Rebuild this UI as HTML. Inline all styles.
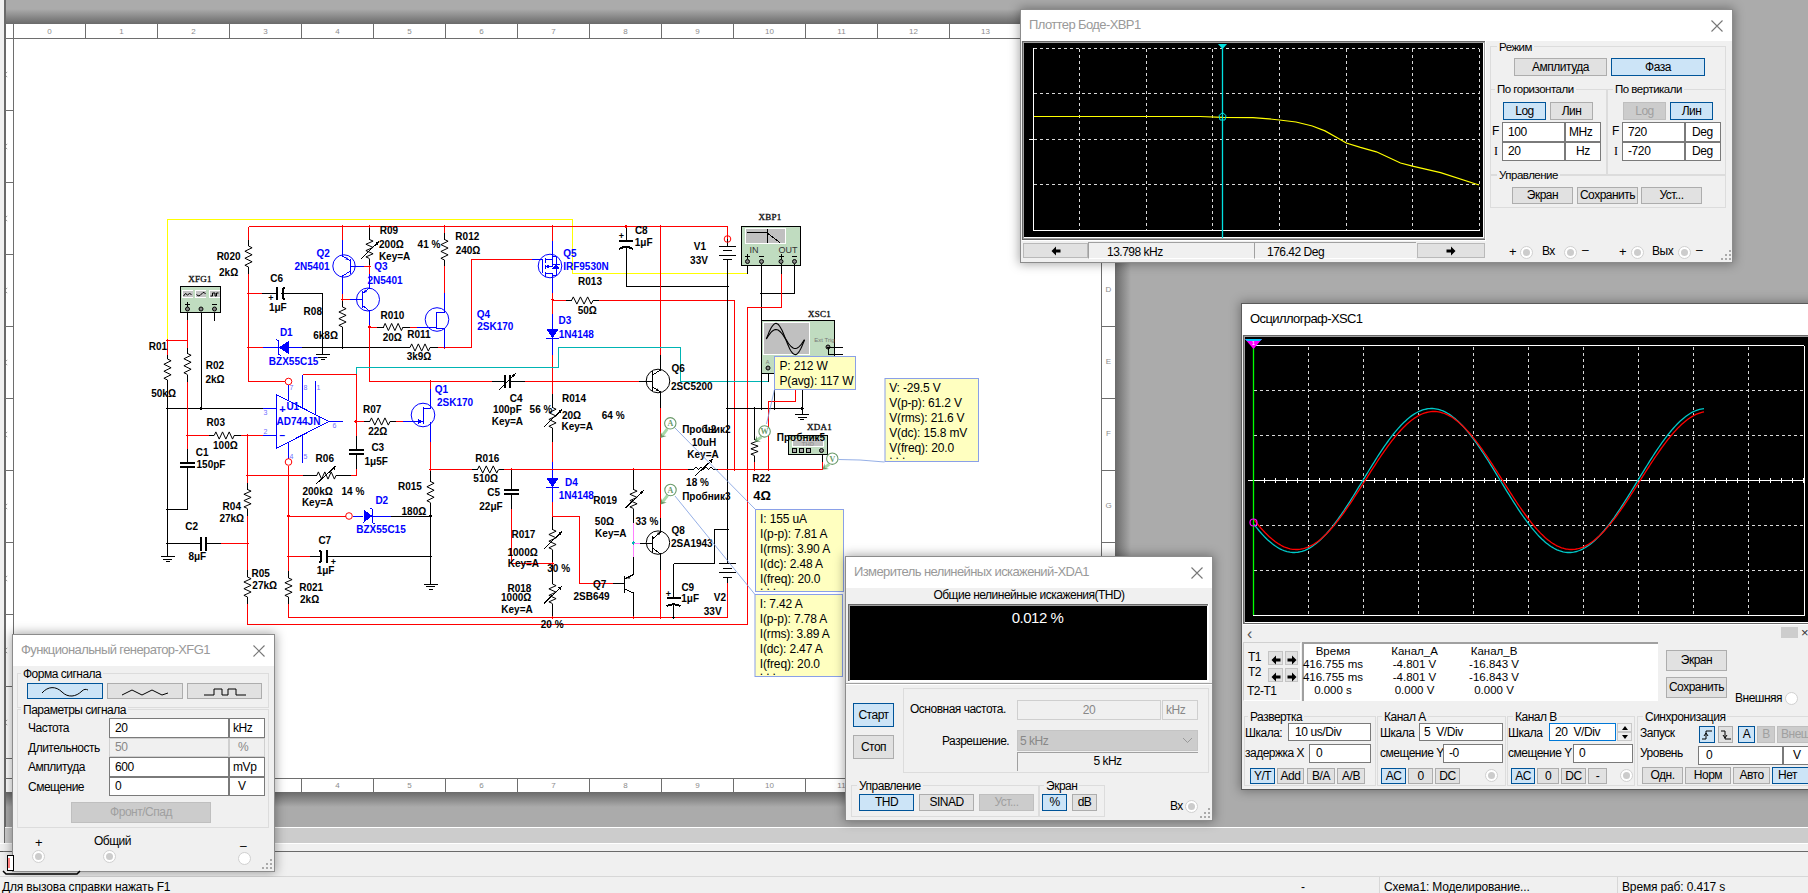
<!DOCTYPE html><html><head><meta charset="utf-8"><style>
*{margin:0;padding:0;box-sizing:border-box}
html,body{width:1808px;height:893px;overflow:hidden;background:#f0f0f0;font-family:"Liberation Sans", sans-serif;font-size:12px;color:#000}
.a{position:absolute}
.t{position:absolute;white-space:nowrap;line-height:1;letter-spacing:-0.5px}
.win{position:absolute;background:#f0f0f0;border:1px solid #8c8c8c;box-shadow:0 0 10px 1px rgba(0,0,0,0.35)}
.tb{position:absolute;left:0;top:0;right:0;background:#fff}
.ttl{position:absolute;white-space:nowrap;line-height:1;color:#999;font-size:13px;letter-spacing:-0.6px}
.btn{position:absolute;background:#e1e1e1;border:1px solid #adadad;text-align:center;white-space:nowrap;font-size:12px;letter-spacing:-0.5px}
.sel{background:#cce4f7;border-color:#005499}
.fld{position:absolute;background:#fff;border:1px solid #7a7a7a;white-space:nowrap;font-size:12px;letter-spacing:-0.4px}
.grp{position:absolute;border:1px solid #dcdcdc}
.gl{position:absolute;background:#f0f0f0;white-space:nowrap;line-height:1;padding:0 2px;font-size:12px;letter-spacing:-0.5px}
.rad{position:absolute;width:13px;height:13px;border-radius:50%;background:#fff;border:1px solid #d0d0d0}
.rad.dis::after{content:'';position:absolute;left:2px;top:2px;width:7px;height:7px;border-radius:50%;background:#ccc}
</style></head><body>
<div class="a" style="left:5px;top:0;width:1803px;height:851px;background:#ababab"></div>
<div class="a" style="left:5px;top:0;width:1110px;height:24px;background:linear-gradient(#ababab 0,#ababab 9px,#6a6a6a 24px)"></div>
<div class="a" style="left:1115px;top:23px;width:16px;height:769px;background:linear-gradient(90deg,#6a6a6a,#ababab)"></div>
<div class="a" style="left:5px;top:792px;width:1110px;height:15px;background:linear-gradient(#6a6a6a,#ababab)"></div>
<div class="a" style="left:1115px;top:792px;width:16px;height:15px;background:linear-gradient(135deg,#6a6a6a,#ababab)"></div>
<div class="a" style="left:4px;top:0;width:2px;height:844px;background:#6a6a6a"></div>
<div class="a" style="left:5px;top:827px;width:1803px;height:1px;background:#fff"></div>
<div class="a" style="left:5px;top:828px;width:1803px;height:15px;background:#cccccc"></div>
<div class="a" style="left:0;top:843px;width:1808px;height:8px;background:#f0f0f0;border-top:1px solid #fff"></div>
<div class="a" style="left:0;top:851px;width:1808px;height:1px;background:#6a6a6a"></div>
<div class="a" style="left:0;top:876px;width:1808px;height:1px;background:#d7d7d7"></div>
<div class="a" style="left:6px;top:24px;width:1109px;height:768px;background:#fff"></div>
<svg class="a" style="left:0;top:0" width="1808" height="893"><g stroke="#6e6e6e" stroke-width="1" fill="none" shape-rendering="crispEdges"><line x1="5" y1="38.5" x2="1101" y2="38.5"/><line x1="13.5" y1="23" x2="13.5" y2="779"/><line x1="1101.5" y1="23" x2="1101.5" y2="779"/><line x1="5" y1="778.5" x2="1115" y2="778.5"/><line x1="13.5" y1="23" x2="13.5" y2="38.5"/><line x1="13.5" y1="778.5" x2="13.5" y2="792"/><line x1="85.5" y1="23" x2="85.5" y2="38.5"/><line x1="85.5" y1="778.5" x2="85.5" y2="792"/><line x1="157.5" y1="23" x2="157.5" y2="38.5"/><line x1="157.5" y1="778.5" x2="157.5" y2="792"/><line x1="229.5" y1="23" x2="229.5" y2="38.5"/><line x1="229.5" y1="778.5" x2="229.5" y2="792"/><line x1="301.5" y1="23" x2="301.5" y2="38.5"/><line x1="301.5" y1="778.5" x2="301.5" y2="792"/><line x1="373.5" y1="23" x2="373.5" y2="38.5"/><line x1="373.5" y1="778.5" x2="373.5" y2="792"/><line x1="445.5" y1="23" x2="445.5" y2="38.5"/><line x1="445.5" y1="778.5" x2="445.5" y2="792"/><line x1="517.5" y1="23" x2="517.5" y2="38.5"/><line x1="517.5" y1="778.5" x2="517.5" y2="792"/><line x1="589.5" y1="23" x2="589.5" y2="38.5"/><line x1="589.5" y1="778.5" x2="589.5" y2="792"/><line x1="661.5" y1="23" x2="661.5" y2="38.5"/><line x1="661.5" y1="778.5" x2="661.5" y2="792"/><line x1="733.5" y1="23" x2="733.5" y2="38.5"/><line x1="733.5" y1="778.5" x2="733.5" y2="792"/><line x1="805.5" y1="23" x2="805.5" y2="38.5"/><line x1="805.5" y1="778.5" x2="805.5" y2="792"/><line x1="877.5" y1="23" x2="877.5" y2="38.5"/><line x1="877.5" y1="778.5" x2="877.5" y2="792"/><line x1="949.5" y1="23" x2="949.5" y2="38.5"/><line x1="949.5" y1="778.5" x2="949.5" y2="792"/><line x1="1021.5" y1="23" x2="1021.5" y2="38.5"/><line x1="1021.5" y1="778.5" x2="1021.5" y2="792"/><line x1="1093.5" y1="23" x2="1093.5" y2="38.5"/><line x1="1093.5" y1="778.5" x2="1093.5" y2="792"/><line x1="5" y1="110.5" x2="13.5" y2="110.5"/><line x1="1101.5" y1="110.5" x2="1115" y2="110.5"/><line x1="5" y1="182.5" x2="13.5" y2="182.5"/><line x1="1101.5" y1="182.5" x2="1115" y2="182.5"/><line x1="5" y1="254.5" x2="13.5" y2="254.5"/><line x1="1101.5" y1="254.5" x2="1115" y2="254.5"/><line x1="5" y1="326.5" x2="13.5" y2="326.5"/><line x1="1101.5" y1="326.5" x2="1115" y2="326.5"/><line x1="5" y1="398.5" x2="13.5" y2="398.5"/><line x1="1101.5" y1="398.5" x2="1115" y2="398.5"/><line x1="5" y1="470.5" x2="13.5" y2="470.5"/><line x1="1101.5" y1="470.5" x2="1115" y2="470.5"/><line x1="5" y1="542.5" x2="13.5" y2="542.5"/><line x1="1101.5" y1="542.5" x2="1115" y2="542.5"/><line x1="5" y1="614.5" x2="13.5" y2="614.5"/><line x1="1101.5" y1="614.5" x2="1115" y2="614.5"/><line x1="5" y1="686.5" x2="13.5" y2="686.5"/><line x1="1101.5" y1="686.5" x2="1115" y2="686.5"/><line x1="5" y1="758.5" x2="13.5" y2="758.5"/><line x1="1101.5" y1="758.5" x2="1115" y2="758.5"/></g><g fill="#8c8c8c" font-size="8" font-family="Liberation Sans, sans-serif" text-anchor="middle"><text x="49.5" y="34">0</text><text x="49.5" y="788">0</text><text x="121.5" y="34">1</text><text x="121.5" y="788">1</text><text x="193.5" y="34">2</text><text x="193.5" y="788">2</text><text x="265.5" y="34">3</text><text x="265.5" y="788">3</text><text x="337.5" y="34">4</text><text x="337.5" y="788">4</text><text x="409.5" y="34">5</text><text x="409.5" y="788">5</text><text x="481.5" y="34">6</text><text x="481.5" y="788">6</text><text x="553.5" y="34">7</text><text x="553.5" y="788">7</text><text x="625.5" y="34">8</text><text x="625.5" y="788">8</text><text x="697.5" y="34">9</text><text x="697.5" y="788">9</text><text x="769.5" y="34">10</text><text x="769.5" y="788">10</text><text x="841.5" y="34">11</text><text x="841.5" y="788">11</text><text x="913.5" y="34">12</text><text x="913.5" y="788">12</text><text x="985.5" y="34">13</text><text x="985.5" y="788">13</text><text x="1057.5" y="34">14</text><text x="1057.5" y="788">14</text><text x="1108.5" y="76.0">A</text><path d="M6,73.0 l1.2,-1 M6,76.0 l1.2,1" stroke="#888" stroke-width="0.9"/><text x="1108.5" y="148.0">B</text><path d="M6,145.0 l1.2,-1 M6,148.0 l1.2,1" stroke="#888" stroke-width="0.9"/><text x="1108.5" y="220.0">C</text><path d="M6,217.0 l1.2,-1 M6,220.0 l1.2,1" stroke="#888" stroke-width="0.9"/><text x="1108.5" y="292.0">D</text><path d="M6,289.0 l1.2,-1 M6,292.0 l1.2,1" stroke="#888" stroke-width="0.9"/><text x="1108.5" y="364.0">E</text><path d="M6,361.0 l1.2,-1 M6,364.0 l1.2,1" stroke="#888" stroke-width="0.9"/><text x="1108.5" y="436.0">F</text><path d="M6,433.0 l1.2,-1 M6,436.0 l1.2,1" stroke="#888" stroke-width="0.9"/><text x="1108.5" y="508.0">G</text><path d="M6,505.0 l1.2,-1 M6,508.0 l1.2,1" stroke="#888" stroke-width="0.9"/><text x="1108.5" y="580.0">H</text><path d="M6,577.0 l1.2,-1 M6,580.0 l1.2,1" stroke="#888" stroke-width="0.9"/><text x="1108.5" y="652.0">I</text><path d="M6,649.0 l1.2,-1 M6,652.0 l1.2,1" stroke="#888" stroke-width="0.9"/><text x="1108.5" y="724.0">J</text><path d="M6,721.0 l1.2,-1 M6,724.0 l1.2,1" stroke="#888" stroke-width="0.9"/></g></svg>
<svg class="a" style="left:0;top:0" width="1808" height="893" font-family="Liberation Sans, sans-serif"><g shape-rendering="crispEdges"><polyline points="167.5,340.5 167.5,219.5 572.5,219.5 572.5,273.5 747.5,273.5" fill="none" stroke="#ffff00" stroke-width="1"/><line x1="747.5" y1="261.5" x2="747.5" y2="273.5" stroke="#000000" stroke-width="1"/><line x1="248.5" y1="226.5" x2="727.5" y2="226.5" stroke="#ff0000" stroke-width="1"/><line x1="727.5" y1="226.5" x2="727.5" y2="239" stroke="#ff0000" stroke-width="1"/><line x1="248.5" y1="226.5" x2="248.5" y2="240" stroke="#ff0000" stroke-width="1"/><line x1="248.5" y1="240" x2="248.5" y2="246" stroke="#000000" stroke-width="1"/><line x1="248.5" y1="267" x2="248.5" y2="274" stroke="#000000" stroke-width="1"/><line x1="248.5" y1="274" x2="248.5" y2="381.5" stroke="#ff0000" stroke-width="1"/><polyline points="248.5,246 252.1,247.75 244.9,251.25 252.1,254.75 244.9,258.25 252.1,261.75 244.9,265.25 248.5,267" fill="none" stroke="#000000" stroke-width="1" shape-rendering="geometricPrecision"/><path d="M246.7,293.5 L248.5,291.7 L250.3,293.5 L248.5,295.3Z" fill="#ff0000"/><path d="M246.7,347.5 L248.5,345.7 L250.3,347.5 L248.5,349.3Z" fill="#ff0000"/><line x1="248.5" y1="293.5" x2="262" y2="293.5" stroke="#ff0000" stroke-width="1"/><line x1="262" y1="293.5" x2="276" y2="293.5" stroke="#000000" stroke-width="1"/><line x1="283" y1="293.5" x2="322.5" y2="293.5" stroke="#000000" stroke-width="1"/><line x1="276.5" y1="287.0" x2="276.5" y2="300.0" stroke="#000000" stroke-width="2"/><path d="M284.0,287.0 Q281.0,293.5 284.0,300.0" fill="none" stroke="#000000" stroke-width="2"/><line x1="322.5" y1="293.5" x2="322.5" y2="354.5" stroke="#000000" stroke-width="1"/><line x1="315.5" y1="354.5" x2="329.5" y2="354.5" stroke="#000000" stroke-width="1"/><line x1="318.0" y1="357.0" x2="327.0" y2="357.0" stroke="#000000" stroke-width="1"/><line x1="320.5" y1="359.5" x2="324.5" y2="359.5" stroke="#000000" stroke-width="1"/><line x1="248.5" y1="347.5" x2="262.5" y2="347.5" stroke="#ff0000" stroke-width="1"/><line x1="262.5" y1="347.5" x2="301.5" y2="347.5" stroke="#0000ff" stroke-width="1"/><line x1="301.5" y1="347.5" x2="410" y2="347.5" stroke="#000000" stroke-width="1"/><line x1="430" y1="347.5" x2="438" y2="347.5" stroke="#000000" stroke-width="1"/><line x1="438" y1="347.5" x2="471.5" y2="347.5" stroke="#ff0000" stroke-width="1"/><polyline points="410,347.5 411.6666666666667,343.9 415.0,351.1 418.3333333333333,343.9 421.6666666666667,351.1 425.0,343.9 428.3333333333333,351.1 430,347.5" fill="none" stroke="#000000" stroke-width="1" shape-rendering="geometricPrecision"/><path d="M320.7,347.5 L322.5,345.7 L324.3,347.5 L322.5,349.3Z" fill="#000000"/><path d="M340.7,347.5 L342.5,345.7 L344.3,347.5 L342.5,349.3Z" fill="#000000"/><path d="M442.7,347.5 L444.5,345.7 L446.3,347.5 L444.5,349.3Z" fill="#ff0000"/><path d="M288.5,341 L288.5,354 L278.5,347.5Z" fill="#0000ff"/><polyline points="276,339.5 278.5,341 278.5,354 281,355.5" fill="none" stroke="#0000ff" stroke-width="1"/><line x1="248.5" y1="381.5" x2="285" y2="381.5" stroke="#ff0000" stroke-width="1"/><circle cx="288.5" cy="381.5" r="3.3" fill="none" stroke="#ff0000" stroke-width="1" shape-rendering="geometricPrecision"/><line x1="342.5" y1="226.5" x2="342.5" y2="239.5" stroke="#ff0000" stroke-width="1"/><line x1="342.5" y1="239.5" x2="342.5" y2="256" stroke="#0000ff" stroke-width="1"/><line x1="342.5" y1="276" x2="342.5" y2="293.5" stroke="#0000ff" stroke-width="1"/><line x1="342.5" y1="293.5" x2="342.5" y2="299.5" stroke="#ff0000" stroke-width="1"/><line x1="342.5" y1="299.5" x2="342.5" y2="307" stroke="#000000" stroke-width="1"/><line x1="342.5" y1="327" x2="342.5" y2="347.5" stroke="#000000" stroke-width="1"/><polyline points="342.5,307 346.1,308.6666666666667 338.9,312.0 346.1,315.3333333333333 338.9,318.6666666666667 346.1,322.0 338.9,325.3333333333333 342.5,327" fill="none" stroke="#000000" stroke-width="1" shape-rendering="geometricPrecision"/><path d="M340.7,226.5 L342.5,224.7 L344.3,226.5 L342.5,228.3Z" fill="#ff0000"/><path d="M340.7,299.5 L342.5,297.7 L344.3,299.5 L342.5,301.3Z" fill="#ff0000"/><circle cx="344" cy="266" r="11.2" fill="none" stroke="#0000ff" stroke-width="1" shape-rendering="geometricPrecision"/><line x1="350.5" y1="258.5" x2="350.5" y2="273.5" stroke="#0000ff" stroke-width="1"/><line x1="350.5" y1="261" x2="342.5" y2="256" stroke="#0000ff" stroke-width="1"/><line x1="350.5" y1="271" x2="342.5" y2="276" stroke="#0000ff" stroke-width="1"/><path d="M348.5,259.8 L345.3,259.6 L346.9,257.0Z" fill="#0000ff" shape-rendering="geometricPrecision"/><line x1="350.5" y1="266.5" x2="363.5" y2="266.5" stroke="#0000ff" stroke-width="1"/><line x1="363.5" y1="266.5" x2="369.5" y2="266.5" stroke="#ff0000" stroke-width="1"/><line x1="369.5" y1="226.5" x2="369.5" y2="239.5" stroke="#000000" stroke-width="1"/><line x1="369.5" y1="258.5" x2="369.5" y2="266.5" stroke="#000000" stroke-width="1"/><line x1="369.5" y1="266.5" x2="369.5" y2="274" stroke="#ff0000" stroke-width="1"/><line x1="369.5" y1="274" x2="369.5" y2="288" stroke="#0000ff" stroke-width="1"/><line x1="369.5" y1="311" x2="369.5" y2="327" stroke="#0000ff" stroke-width="1"/><line x1="369.5" y1="327" x2="369.5" y2="381.5" stroke="#ff0000" stroke-width="1"/><polyline points="369.5,239.5 373.1,241.08333333333334 365.9,244.25 373.1,247.41666666666666 365.9,250.58333333333334 373.1,253.75 365.9,256.9166666666667 369.5,258.5" fill="none" stroke="#000000" stroke-width="1" shape-rendering="geometricPrecision"/><line x1="361" y1="258.7" x2="379" y2="241.5" stroke="#000000" stroke-width="1"/><path d="M379,241.5 L377.6,245.2 L375.2,242.7Z" fill="#000000"/><path d="M367.7,226.5 L369.5,224.7 L371.3,226.5 L369.5,228.3Z" fill="#ff0000"/><path d="M367.7,266.5 L369.5,264.7 L371.3,266.5 L369.5,268.3Z" fill="#ff0000"/><path d="M367.7,327 L369.5,325.2 L371.3,327 L369.5,328.8Z" fill="#ff0000"/><circle cx="368" cy="299.5" r="11.5" fill="none" stroke="#0000ff" stroke-width="1" shape-rendering="geometricPrecision"/><line x1="362" y1="291" x2="362" y2="308" stroke="#0000ff" stroke-width="1"/><line x1="362" y1="294" x2="369.5" y2="288" stroke="#0000ff" stroke-width="1"/><line x1="362" y1="305" x2="369.5" y2="311" stroke="#0000ff" stroke-width="1"/><path d="M363.9,292.5 L365.1,289.5 L367.0,291.9Z" fill="#0000ff" shape-rendering="geometricPrecision"/><line x1="342.5" y1="299.5" x2="349.5" y2="299.5" stroke="#ff0000" stroke-width="1"/><line x1="349.5" y1="299.5" x2="362" y2="299.5" stroke="#0000ff" stroke-width="1"/><line x1="369.5" y1="327" x2="377" y2="327" stroke="#ff0000" stroke-width="1"/><line x1="377" y1="327" x2="383.5" y2="327" stroke="#000000" stroke-width="1"/><line x1="403" y1="327" x2="410" y2="327" stroke="#000000" stroke-width="1"/><line x1="410" y1="327" x2="417" y2="327" stroke="#ff0000" stroke-width="1"/><line x1="417" y1="327" x2="436.5" y2="327" stroke="#0000ff" stroke-width="1"/><polyline points="383.5,327 385.125,323.4 388.375,330.6 391.625,323.4 394.875,330.6 398.125,323.4 401.375,330.6 403,327" fill="none" stroke="#000000" stroke-width="1" shape-rendering="geometricPrecision"/><circle cx="437" cy="319.5" r="11.8" fill="none" stroke="#0000ff" stroke-width="1" shape-rendering="geometricPrecision"/><line x1="436.5" y1="311.5" x2="436.5" y2="328.5" stroke="#0000ff" stroke-width="1"/><line x1="436.5" y1="312.5" x2="445" y2="312.5" stroke="#0000ff" stroke-width="1"/><line x1="436.5" y1="328.5" x2="445" y2="328.5" stroke="#0000ff" stroke-width="1"/><line x1="444.5" y1="226.5" x2="444.5" y2="233" stroke="#ff0000" stroke-width="1"/><line x1="444.5" y1="233" x2="444.5" y2="239.5" stroke="#000000" stroke-width="1"/><line x1="444.5" y1="260" x2="444.5" y2="266" stroke="#000000" stroke-width="1"/><line x1="444.5" y1="266" x2="444.5" y2="293" stroke="#ff0000" stroke-width="1"/><line x1="444.5" y1="293" x2="444.5" y2="312.5" stroke="#0000ff" stroke-width="1"/><line x1="444.5" y1="328.5" x2="444.5" y2="347.5" stroke="#0000ff" stroke-width="1"/><polyline points="444.5,239.5 448.1,241.20833333333334 440.9,244.625 448.1,248.04166666666666 440.9,251.45833333333334 448.1,254.875 440.9,258.2916666666667 444.5,260" fill="none" stroke="#000000" stroke-width="1" shape-rendering="geometricPrecision"/><path d="M442.7,226.5 L444.5,224.7 L446.3,226.5 L444.5,228.3Z" fill="#ff0000"/><polyline points="531.5,259.5 471.5,259.5 471.5,347.5" fill="none" stroke="#ff0000" stroke-width="1"/><line x1="531.5" y1="259.5" x2="542.5" y2="259.5" stroke="#0000ff" stroke-width="1"/><line x1="552.5" y1="226.5" x2="552.5" y2="240.5" stroke="#ff0000" stroke-width="1"/><line x1="552.5" y1="240.5" x2="552.5" y2="255" stroke="#0000ff" stroke-width="1"/><line x1="552.5" y1="277" x2="552.5" y2="293" stroke="#0000ff" stroke-width="1"/><line x1="552.5" y1="293" x2="552.5" y2="313.5" stroke="#ff0000" stroke-width="1"/><line x1="552.5" y1="313.5" x2="552.5" y2="354.5" stroke="#0000ff" stroke-width="1"/><line x1="552.5" y1="354.5" x2="552.5" y2="393.5" stroke="#ff0000" stroke-width="1"/><line x1="552.5" y1="393.5" x2="552.5" y2="407.5" stroke="#000000" stroke-width="1"/><line x1="552.5" y1="428" x2="552.5" y2="442" stroke="#000000" stroke-width="1"/><line x1="552.5" y1="442" x2="552.5" y2="462" stroke="#ff0000" stroke-width="1"/><line x1="552.5" y1="462" x2="552.5" y2="501.5" stroke="#0000ff" stroke-width="1"/><line x1="552.5" y1="501.5" x2="552.5" y2="516.5" stroke="#ff0000" stroke-width="1"/><line x1="552.5" y1="516.5" x2="552.5" y2="529.5" stroke="#000000" stroke-width="1"/><line x1="552.5" y1="549.5" x2="552.5" y2="584" stroke="#000000" stroke-width="1"/><line x1="552.5" y1="603.5" x2="552.5" y2="617.5" stroke="#000000" stroke-width="1"/><path d="M550.7,226.5 L552.5,224.7 L554.3,226.5 L552.5,228.3Z" fill="#ff0000"/><path d="M550.7,299.5 L552.5,297.7 L554.3,299.5 L552.5,301.3Z" fill="#ff0000"/><path d="M550.7,381.5 L552.5,379.7 L554.3,381.5 L552.5,383.3Z" fill="#ff0000"/><path d="M550.7,563.5 L552.5,561.7 L554.3,563.5 L552.5,565.3Z" fill="#ff0000"/><path d="M550.7,617.5 L552.5,615.7 L554.3,617.5 L552.5,619.3Z" fill="#ff0000"/><circle cx="550" cy="266" r="11.8" fill="none" stroke="#0000ff" stroke-width="1" shape-rendering="geometricPrecision"/><line x1="542.5" y1="258.5" x2="542.5" y2="272.5" stroke="#0000ff" stroke-width="1"/><line x1="545" y1="258" x2="545" y2="262.5" stroke="#0000ff" stroke-width="1"/><line x1="545" y1="265" x2="545" y2="268.5" stroke="#0000ff" stroke-width="1"/><line x1="545" y1="272" x2="545" y2="276.5" stroke="#0000ff" stroke-width="1"/><line x1="545" y1="259.5" x2="552.5" y2="259.5" stroke="#0000ff" stroke-width="1"/><line x1="545" y1="266.5" x2="552.5" y2="266.5" stroke="#0000ff" stroke-width="1"/><line x1="545" y1="273.5" x2="552.5" y2="273.5" stroke="#0000ff" stroke-width="1"/><line x1="552.5" y1="255" x2="552.5" y2="266.5" stroke="#0000ff" stroke-width="1"/><line x1="552.5" y1="273.5" x2="552.5" y2="277" stroke="#0000ff" stroke-width="1"/><path d="M545.5,266.5 L549,264.2 L549,268.8Z" fill="#0000ff"/><line x1="556" y1="256.5" x2="556" y2="275.5" stroke="#0000ff" stroke-width="1"/><line x1="552.5" y1="256.5" x2="556" y2="256.5" stroke="#0000ff" stroke-width="1"/><line x1="552.5" y1="275.5" x2="556" y2="275.5" stroke="#0000ff" stroke-width="1"/><path d="M556,264 L559.5,268.5 L552.5,268.5Z" fill="#0000ff"/><line x1="552.5" y1="264.5" x2="559.5" y2="264.5" stroke="#0000ff" stroke-width="1"/><path d="M546,328.5 L559,328.5 L552.5,338Z" fill="#0000ff"/><line x1="546" y1="338.5" x2="559" y2="338.5" stroke="#0000ff" stroke-width="1"/><polyline points="552.5,407.5 556.1,409.2083333333333 548.9,412.625 556.1,416.0416666666667 548.9,419.4583333333333 556.1,422.875 548.9,426.2916666666667 552.5,428" fill="none" stroke="#000000" stroke-width="1" shape-rendering="geometricPrecision"/><line x1="544" y1="427" x2="562" y2="409.5" stroke="#000000" stroke-width="1"/><path d="M562,409.5 L560.6,413.3 L558.2,410.8Z" fill="#000000"/><path d="M546,477.5 L559,477.5 L552.5,487Z" fill="#0000ff"/><line x1="546" y1="487.5" x2="559" y2="487.5" stroke="#0000ff" stroke-width="1"/><polyline points="552.5,529.5 556.1,531.1666666666666 548.9,534.5 556.1,537.8333333333334 548.9,541.1666666666666 556.1,544.5 548.9,547.8333333333334 552.5,549.5" fill="none" stroke="#000000" stroke-width="1" shape-rendering="geometricPrecision"/><line x1="544" y1="549" x2="562" y2="531.5" stroke="#000000" stroke-width="1"/><path d="M562,531.5 L560.6,535.3 L558.2,532.8Z" fill="#000000"/><polyline points="552.5,584 556.1,585.625 548.9,588.875 556.1,592.125 548.9,595.375 556.1,598.625 548.9,601.875 552.5,603.5" fill="none" stroke="#000000" stroke-width="1" shape-rendering="geometricPrecision"/><line x1="544" y1="603.5" x2="562" y2="586" stroke="#000000" stroke-width="1"/><path d="M562,586 L560.6,589.8 L558.2,587.3Z" fill="#000000"/><line x1="552.5" y1="300.5" x2="566" y2="300.5" stroke="#ff0000" stroke-width="1"/><line x1="566" y1="300.5" x2="571.5" y2="300.5" stroke="#000000" stroke-width="1"/><line x1="593" y1="300.5" x2="599" y2="300.5" stroke="#000000" stroke-width="1"/><line x1="599" y1="300.5" x2="734.5" y2="300.5" stroke="#ff0000" stroke-width="1"/><polyline points="571.5,300.5 573.2916666666666,296.9 576.875,304.1 580.4583333333334,296.9 584.0416666666666,304.1 587.625,296.9 591.2083333333334,304.1 593,300.5" fill="none" stroke="#000000" stroke-width="1" shape-rendering="geometricPrecision"/><line x1="734.5" y1="300.5" x2="734.5" y2="469.5" stroke="#ff0000" stroke-width="1"/><line x1="626" y1="226.5" x2="626" y2="240" stroke="#000000" stroke-width="1"/><line x1="626" y1="248" x2="626" y2="287" stroke="#000000" stroke-width="1"/><path d="M624.2,226.5 L626,224.7 L627.8,226.5 L626,228.3Z" fill="#ff0000"/><line x1="619" y1="240.5" x2="633" y2="240.5" stroke="#000000" stroke-width="2"/><path d="M619,249 Q626,245 633,249" fill="none" stroke="#000000" stroke-width="2"/><line x1="626" y1="286.5" x2="727.5" y2="286.5" stroke="#000000" stroke-width="1"/><path d="M725.7,286.5 L727.5,284.7 L729.3,286.5 L727.5,288.3Z" fill="#000000"/><line x1="660.5" y1="226.5" x2="660.5" y2="355" stroke="#ff0000" stroke-width="1"/><line x1="660.5" y1="355" x2="660.5" y2="370" stroke="#000000" stroke-width="1"/><line x1="660.5" y1="392" x2="660.5" y2="407.5" stroke="#000000" stroke-width="1"/><line x1="660.5" y1="407.5" x2="660.5" y2="517.5" stroke="#ff0000" stroke-width="1"/><line x1="660.5" y1="517.5" x2="660.5" y2="532" stroke="#000000" stroke-width="1"/><line x1="660.5" y1="554" x2="660.5" y2="569.5" stroke="#000000" stroke-width="1"/><line x1="660.5" y1="569.5" x2="660.5" y2="617.5" stroke="#ff0000" stroke-width="1"/><path d="M658.7,226.5 L660.5,224.7 L662.3,226.5 L660.5,228.3Z" fill="#ff0000"/><path d="M658.7,469.5 L660.5,467.7 L662.3,469.5 L660.5,471.3Z" fill="#ff0000"/><path d="M658.7,617.5 L660.5,615.7 L662.3,617.5 L660.5,619.3Z" fill="#ff0000"/><circle cx="658" cy="381" r="11.8" fill="none" stroke="#000000" stroke-width="1" shape-rendering="geometricPrecision"/><line x1="652.5" y1="371" x2="652.5" y2="391" stroke="#000000" stroke-width="1"/><line x1="652.5" y1="375" x2="660.5" y2="370" stroke="#000000" stroke-width="1"/><line x1="652.5" y1="387" x2="660.5" y2="392" stroke="#000000" stroke-width="1"/><path d="M658.9,391.0 L655.7,390.8 L657.3,388.2Z" fill="#000000" shape-rendering="geometricPrecision"/><line x1="552.5" y1="381.5" x2="639" y2="381.5" stroke="#ff0000" stroke-width="1"/><line x1="639" y1="381.5" x2="652.5" y2="381.5" stroke="#000000" stroke-width="1"/><polyline points="356,374 356,367.5 558.5,367.5 558.5,347.5 680.5,347.5 680.5,381.5 768.5,381.5" fill="none" stroke="#00b4b4" stroke-width="1"/><line x1="768.5" y1="370" x2="768.5" y2="381.5" stroke="#000000" stroke-width="1"/><line x1="727.5" y1="239" x2="727.5" y2="246.5" stroke="#000000" stroke-width="1"/><line x1="727.5" y1="259.5" x2="727.5" y2="563.5" stroke="#000000" stroke-width="1"/><line x1="727.5" y1="577.5" x2="727.5" y2="583" stroke="#000000" stroke-width="1"/><line x1="727.5" y1="583" x2="727.5" y2="617.5" stroke="#ff0000" stroke-width="1"/><circle cx="727.5" cy="239" r="3.3" fill="none" stroke="#ff0000" stroke-width="1" shape-rendering="geometricPrecision"/><line x1="719.0" y1="246.5" x2="736.0" y2="246.5" stroke="#000000" stroke-width="1"/><line x1="723.0" y1="250.5" x2="732.0" y2="250.5" stroke="#000000" stroke-width="1"/><line x1="719.0" y1="255.5" x2="736.0" y2="255.5" stroke="#000000" stroke-width="1"/><line x1="723.0" y1="259.5" x2="732.0" y2="259.5" stroke="#000000" stroke-width="1"/><line x1="719.0" y1="563.5" x2="736.0" y2="563.5" stroke="#000000" stroke-width="1"/><line x1="723.0" y1="568.5" x2="732.0" y2="568.5" stroke="#000000" stroke-width="1"/><line x1="719.0" y1="572.5" x2="736.0" y2="572.5" stroke="#000000" stroke-width="1"/><line x1="723.0" y1="577.5" x2="732.0" y2="577.5" stroke="#000000" stroke-width="1"/><path d="M725.7,408.5 L727.5,406.7 L729.3,408.5 L727.5,410.3Z" fill="#000000"/><path d="M725.7,529.5 L727.5,527.7 L729.3,529.5 L727.5,531.3Z" fill="#000000"/><rect x="741.5" y="226.5" width="59" height="39" fill="#c0dcc0" stroke="#000000"/><rect x="745.5" y="228.5" width="40" height="14.5" fill="#c0c0c0" stroke="#fff"/><polyline points="747,232.5 766.5,232.5 780,242.5" fill="none" stroke="#000000" stroke-width="1"/><line x1="767.5" y1="229" x2="767.5" y2="242.5" stroke="#000000" stroke-width="1"/><text x="754" y="252.7" fill="#333" font-size="9" font-weight="normal" text-anchor="middle" >IN</text><text x="788" y="252.7" fill="#333" font-size="9" font-weight="normal" text-anchor="middle" >OUT</text><circle cx="747.5" cy="261.5" r="2" fill="#888" stroke="#000000" stroke-width="1" shape-rendering="geometricPrecision"/><circle cx="761.5" cy="261.5" r="2" fill="#888" stroke="#000000" stroke-width="1" shape-rendering="geometricPrecision"/><circle cx="781" cy="261.5" r="2" fill="#888" stroke="#000000" stroke-width="1" shape-rendering="geometricPrecision"/><circle cx="794.5" cy="261.5" r="2" fill="#888" stroke="#000000" stroke-width="1" shape-rendering="geometricPrecision"/><line x1="745" y1="256.5" x2="750" y2="256.5" stroke="#000000" stroke-width="1"/><line x1="747.5" y1="254" x2="747.5" y2="259" stroke="#000000" stroke-width="1"/><line x1="759" y1="256.5" x2="764" y2="256.5" stroke="#000000" stroke-width="1"/><line x1="778.5" y1="256.5" x2="783.5" y2="256.5" stroke="#000000" stroke-width="1"/><line x1="781" y1="254" x2="781" y2="259" stroke="#000000" stroke-width="1"/><line x1="792" y1="256.5" x2="797" y2="256.5" stroke="#000000" stroke-width="1"/><text x="770" y="220.2" fill="#000000" font-size="9" font-weight="normal" text-anchor="middle" font-family="Liberation Serif, serif" fill="#222" stroke="#222" stroke-width="0.35" letter-spacing="0.3">XBP1</text><line x1="761.5" y1="263.5" x2="761.5" y2="408.5" stroke="#000000" stroke-width="1"/><polyline points="794.5,263.5 794.5,293.5 761.5,293.5" fill="none" stroke="#000000" stroke-width="1"/><path d="M759.7,293.5 L761.5,291.7 L763.3,293.5 L761.5,295.3Z" fill="#000000"/><line x1="781" y1="263.5" x2="781" y2="273.5" stroke="#000000" stroke-width="1"/><polyline points="781,273.5 781,307.5 747.5,307.5 747.5,624.5" fill="none" stroke="#ff0000" stroke-width="1"/><path d="M745.7,469.5 L747.5,467.7 L749.3,469.5 L747.5,471.3Z" fill="#ff0000"/><rect x="761.5" y="320.5" width="73" height="52.5" fill="#c0dcc0" stroke="#000000"/><rect x="763.5" y="322.5" width="46" height="32" fill="#c0c0c0" stroke="#fff"/></g><polyline points="766.3,339.0 767.3,336.5 768.3,334.1 769.2,331.8 770.2,329.7 771.2,327.8 772.2,326.3 773.2,325.0 774.1,324.1 775.1,323.5 776.1,323.4 777.1,323.7 778.1,324.3 779.0,325.3 780.0,326.7 781.0,328.4 782.0,330.3 783.0,332.5 783.9,334.8 784.9,337.3 785.9,339.7 786.9,342.2 787.8,344.6 788.8,346.8 789.8,348.9 790.8,350.7 791.8,352.2 792.7,353.3 793.7,354.1 794.7,354.5 795.7,354.6 796.7,354.2 797.6,353.4 798.6,352.3 799.6,350.8 800.6,349.1 801.6,347.1 802.5,344.8 803.5,342.5 804.5,340.0" fill="none" stroke="#000" stroke-width="1.1" shape-rendering="geometricPrecision"/><polyline points="766.3,339.0 767.3,337.5 768.3,336.0 769.2,334.6 770.2,333.3 771.2,332.2 772.2,331.2 773.2,330.5 774.1,329.9 775.1,329.6 776.1,329.5 777.1,329.7 778.1,330.1 779.0,330.7 780.0,331.5 781.0,332.5 782.0,333.7 783.0,335.0 783.9,336.5 784.9,337.9 785.9,339.4 786.9,340.9 787.8,342.4 788.8,343.8 789.8,345.0 790.8,346.1 791.8,347.0 792.7,347.7 793.7,348.2 794.7,348.5 795.7,348.5 796.7,348.2 797.6,347.8 798.6,347.1 799.6,346.2 800.6,345.1 801.6,343.9 802.5,342.6 803.5,341.1 804.5,339.6" fill="none" stroke="#000" stroke-width="1.1" shape-rendering="geometricPrecision"/><g shape-rendering="crispEdges"><text x="824.5" y="341.7" fill="#777" font-size="6" font-weight="normal" text-anchor="middle" >Ext Trig</text><circle cx="828" cy="347" r="2" fill="#888" stroke="#000000" stroke-width="1" shape-rendering="geometricPrecision"/><polyline points="843,347.5 828,347.5 828.5,354.5 843,354.5" fill="none" stroke="#000000" stroke-width="1"/><circle cx="768" cy="368" r="2" fill="#888" stroke="#000000" stroke-width="1" shape-rendering="geometricPrecision"/><text x="767.5" y="364.0" fill="#777" font-size="5.5" font-weight="normal" text-anchor="middle" >A</text><text x="819.5" y="316.7" fill="#000000" font-size="9" font-weight="normal" text-anchor="middle" font-family="Liberation Serif, serif" fill="#222" stroke="#222" stroke-width="0.35" letter-spacing="0.3">XSC1</text><line x1="727.5" y1="408.5" x2="802" y2="408.5" stroke="#000000" stroke-width="1"/><path d="M752.7,408.5 L754.5,406.7 L756.3,408.5 L754.5,410.3Z" fill="#000000"/><path d="M759.7,408.5 L761.5,406.7 L763.3,408.5 L761.5,410.3Z" fill="#000000"/><path d="M772.7,408.5 L774.5,406.7 L776.3,408.5 L774.5,410.3Z" fill="#000000"/><path d="M800.2,408.5 L802,406.7 L803.8,408.5 L802,410.3Z" fill="#000000"/><line x1="774.5" y1="389.5" x2="774.5" y2="408.5" stroke="#000000" stroke-width="1"/><line x1="802" y1="389.5" x2="802" y2="414.5" stroke="#000000" stroke-width="1"/><line x1="795" y1="414.5" x2="809" y2="414.5" stroke="#000000" stroke-width="1"/><line x1="797.5" y1="417.0" x2="806.5" y2="417.0" stroke="#000000" stroke-width="1"/><line x1="800" y1="419.5" x2="804" y2="419.5" stroke="#000000" stroke-width="1"/><polyline points="795.5,389.5 795.5,401.5 768.5,401.5 768.5,469.5" fill="none" stroke="#ff0000" stroke-width="1"/><path d="M766.7,469.5 L768.5,467.7 L770.3,469.5 L768.5,471.3Z" fill="#ff0000"/><line x1="754.5" y1="408.5" x2="754.5" y2="439.5" stroke="#000000" stroke-width="1"/><line x1="754.5" y1="455.5" x2="754.5" y2="462" stroke="#000000" stroke-width="1"/><line x1="754.5" y1="462" x2="754.5" y2="469.5" stroke="#ff0000" stroke-width="1"/><polyline points="754.5,439.5 758.1,440.8333333333333 750.9,443.5 758.1,446.1666666666667 750.9,448.8333333333333 758.1,451.5 750.9,454.1666666666667 754.5,455.5" fill="none" stroke="#000000" stroke-width="1" shape-rendering="geometricPrecision"/><path d="M752.7,469.5 L754.5,467.7 L756.3,469.5 L754.5,471.3Z" fill="#ff0000"/><line x1="430.5" y1="469.5" x2="471.5" y2="469.5" stroke="#ff0000" stroke-width="1"/><line x1="471.5" y1="469.5" x2="477.5" y2="469.5" stroke="#000000" stroke-width="1"/><line x1="498.5" y1="469.5" x2="504" y2="469.5" stroke="#000000" stroke-width="1"/><line x1="504" y1="469.5" x2="688" y2="469.5" stroke="#ff0000" stroke-width="1"/><line x1="718" y1="469.5" x2="822.5" y2="469.5" stroke="#ff0000" stroke-width="1"/><polyline points="477.5,469.5 479.25,465.9 482.75,473.1 486.25,465.9 489.75,473.1 493.25,465.9 496.75,473.1 498.5,469.5" fill="none" stroke="#000000" stroke-width="1" shape-rendering="geometricPrecision"/><path d="M509.7,469.5 L511.5,467.7 L513.3,469.5 L511.5,471.3Z" fill="#ff0000"/><path d="M631.7,469.5 L633.5,467.7 L635.3,469.5 L633.5,471.3Z" fill="#ff0000"/><path d="M732.7,469.5 L734.5,467.7 L736.3,469.5 L734.5,471.3Z" fill="#ff0000"/><path d="M688,469.5 L693.5,469.5 q2.5,-4 5,0 q2.5,-4 5,0 q2.5,-4 5,0 q2.5,-4 5,0 L718,469.5" fill="none" stroke="#000000"/><line x1="695" y1="476" x2="713" y2="459" stroke="#000000" stroke-width="1"/><path d="M713,459 L711.6,462.7 L709.2,460.2Z" fill="#000000"/><line x1="822.5" y1="469.5" x2="822.5" y2="462" stroke="#ff0000" stroke-width="1"/><line x1="822.5" y1="452" x2="822.5" y2="462" stroke="#000000" stroke-width="1"/><rect x="788.5" y="435.5" width="39" height="19" fill="#c0dcc0" stroke="#000000"/><rect x="792.5" y="439.5" width="31" height="7" fill="#c0c0c0" stroke="#fff"/><text x="808" y="445.5" font-size="6" font-weight="bold" text-anchor="middle" fill="#999">THD</text><rect x="792.5" y="448.5" width="4" height="4" fill="#aaa" stroke="#000000"/><rect x="799.5" y="448.5" width="4" height="4" fill="#aaa" stroke="#000000"/><rect x="806" y="448.5" width="4" height="4" fill="#aaa" stroke="#000000"/><circle cx="821.5" cy="450.5" r="2" fill="#888" stroke="#000000" stroke-width="1" shape-rendering="geometricPrecision"/><text x="819.5" y="430.2" fill="#000000" font-size="9" font-weight="normal" text-anchor="middle" font-family="Liberation Serif, serif" fill="#222" stroke="#222" stroke-width="0.35" letter-spacing="0.3">XDA1</text><line x1="369.5" y1="381.5" x2="491.5" y2="381.5" stroke="#ff0000" stroke-width="1"/><line x1="491.5" y1="381.5" x2="505" y2="381.5" stroke="#000000" stroke-width="1"/><line x1="510" y1="381.5" x2="525" y2="381.5" stroke="#000000" stroke-width="1"/><line x1="525" y1="381.5" x2="552.5" y2="381.5" stroke="#ff0000" stroke-width="1"/><line x1="505" y1="375.0" x2="505" y2="388.0" stroke="#000000" stroke-width="2"/><line x1="510" y1="375.0" x2="510" y2="388.0" stroke="#000000" stroke-width="2"/><line x1="498.5" y1="390.5" x2="515.5" y2="373.5" stroke="#000000" stroke-width="1"/><path d="M515.5,373.5 L514.2,377.3 L511.7,374.8Z" fill="#000000"/><path d="M428.7,381.5 L430.5,379.7 L432.3,381.5 L430.5,383.3Z" fill="#ff0000"/><line x1="430.5" y1="381.5" x2="430.5" y2="389" stroke="#ff0000" stroke-width="1"/><line x1="430.5" y1="389" x2="430.5" y2="408" stroke="#0000ff" stroke-width="1"/><line x1="430.5" y1="421.5" x2="430.5" y2="442" stroke="#0000ff" stroke-width="1"/><line x1="430.5" y1="442" x2="430.5" y2="469.5" stroke="#ff0000" stroke-width="1"/><line x1="430.5" y1="469.5" x2="430.5" y2="481.5" stroke="#000000" stroke-width="1"/><line x1="430.5" y1="502.5" x2="430.5" y2="584" stroke="#000000" stroke-width="1"/><polyline points="430.5,481.5 434.1,483.25 426.9,486.75 434.1,490.25 426.9,493.75 434.1,497.25 426.9,500.75 430.5,502.5" fill="none" stroke="#000000" stroke-width="1" shape-rendering="geometricPrecision"/><path d="M428.7,469.5 L430.5,467.7 L432.3,469.5 L430.5,471.3Z" fill="#ff0000"/><path d="M428.7,516 L430.5,514.2 L432.3,516 L430.5,517.8Z" fill="#000000"/><path d="M428.7,556.5 L430.5,554.7 L432.3,556.5 L430.5,558.3Z" fill="#000000"/><line x1="423.5" y1="584" x2="437.5" y2="584" stroke="#000000" stroke-width="1"/><line x1="426.0" y1="586.5" x2="435.0" y2="586.5" stroke="#000000" stroke-width="1"/><line x1="428.5" y1="589" x2="432.5" y2="589" stroke="#000000" stroke-width="1"/><circle cx="423" cy="415" r="11.8" fill="none" stroke="#0000ff" stroke-width="1" shape-rendering="geometricPrecision"/><line x1="423.5" y1="406.5" x2="423.5" y2="423.5" stroke="#0000ff" stroke-width="1"/><line x1="423.5" y1="408" x2="430.5" y2="408" stroke="#0000ff" stroke-width="1"/><line x1="403" y1="421.5" x2="423.5" y2="421.5" stroke="#0000ff" stroke-width="1"/><path d="M423,421.5 L418,419 L418,424Z" fill="#0000ff"/><path d="M276,394.5 L276,448.5 L329,421.5Z" fill="none" stroke="#0000ff"/><line x1="329" y1="421.5" x2="342.5" y2="421.5" stroke="#0000ff" stroke-width="1"/><line x1="356" y1="421.5" x2="364" y2="421.5" stroke="#ff0000" stroke-width="1"/><line x1="364" y1="421.5" x2="369.8" y2="421.5" stroke="#000000" stroke-width="1"/><line x1="390" y1="421.5" x2="396" y2="421.5" stroke="#000000" stroke-width="1"/><line x1="396" y1="421.5" x2="403" y2="421.5" stroke="#ff0000" stroke-width="1"/><polyline points="369.8,421.5 371.48333333333335,417.9 374.85,425.1 378.2166666666667,417.9 381.5833333333333,425.1 384.95,417.9 388.31666666666666,425.1 390,421.5" fill="none" stroke="#000000" stroke-width="1" shape-rendering="geometricPrecision"/><line x1="288.5" y1="385" x2="288.5" y2="400.5" stroke="#0000ff" stroke-width="1"/><line x1="288.5" y1="442.5" x2="288.5" y2="458.5" stroke="#0000ff" stroke-width="1"/><line x1="302.5" y1="374.5" x2="302.5" y2="407.5" stroke="#0000ff" stroke-width="1"/><line x1="302.5" y1="435" x2="302.5" y2="462.5" stroke="#0000ff" stroke-width="1"/><line x1="315.5" y1="381" x2="315.5" y2="414" stroke="#0000ff" stroke-width="1"/><polyline points="302.5,374.5 356,374.5 356,435.5" fill="none" stroke="#ff0000" stroke-width="1"/><path d="M354.2,421.5 L356,419.7 L357.8,421.5 L356,423.3Z" fill="#ff0000"/><line x1="356" y1="435.5" x2="356" y2="450" stroke="#000000" stroke-width="1"/><line x1="356" y1="454" x2="356" y2="468.5" stroke="#000000" stroke-width="1"/><line x1="356" y1="468.5" x2="356" y2="475.5" stroke="#ff0000" stroke-width="1"/><line x1="348.5" y1="450" x2="363.5" y2="450" stroke="#000000" stroke-width="2"/><line x1="348.5" y1="454" x2="363.5" y2="454" stroke="#000000" stroke-width="2"/><line x1="167.5" y1="408.5" x2="262.5" y2="408.5" stroke="#000000" stroke-width="1"/><line x1="262.5" y1="408.5" x2="276" y2="408.5" stroke="#0000ff" stroke-width="1"/><path d="M165.7,408.5 L167.5,406.7 L169.3,408.5 L167.5,410.3Z" fill="#000000"/><path d="M199.2,408.5 L201,406.7 L202.8,408.5 L201,410.3Z" fill="#000000"/><line x1="187.5" y1="435.5" x2="208.5" y2="435.5" stroke="#ff0000" stroke-width="1"/><line x1="208.5" y1="435.5" x2="214.2" y2="435.5" stroke="#000000" stroke-width="1"/><line x1="234.2" y1="435.5" x2="240.6" y2="435.5" stroke="#000000" stroke-width="1"/><line x1="240.6" y1="435.5" x2="262.5" y2="435.5" stroke="#ff0000" stroke-width="1"/><line x1="262.5" y1="435.5" x2="276" y2="435.5" stroke="#0000ff" stroke-width="1"/><polyline points="214.2,435.5 215.86666666666665,431.9 219.2,439.1 222.53333333333333,431.9 225.86666666666665,439.1 229.2,431.9 232.53333333333333,439.1 234.2,435.5" fill="none" stroke="#000000" stroke-width="1" shape-rendering="geometricPrecision"/><path d="M185.7,435.5 L187.5,433.7 L189.3,435.5 L187.5,437.3Z" fill="#ff0000"/><path d="M245.7,435.5 L247.5,433.7 L249.3,435.5 L247.5,437.3Z" fill="#ff0000"/><text x="282.5" y="412.5" fill="#0000ff" font-size="11" font-weight="bold" text-anchor="middle" >+</text><text x="282.5" y="439.1" fill="#0000ff" font-size="10" font-weight="bold" text-anchor="middle" >−</text><text x="265.5" y="414.5" fill="#7070ff" font-size="7" font-weight="normal" text-anchor="middle" >3</text><text x="265.5" y="433.5" fill="#7070ff" font-size="7" font-weight="normal" text-anchor="middle" >2</text><text x="291.5" y="389.5" fill="#7070ff" font-size="7" font-weight="normal" text-anchor="middle" >7</text><text x="305.5" y="389.5" fill="#7070ff" font-size="7" font-weight="normal" text-anchor="middle" >8</text><text x="318.5" y="389.5" fill="#7070ff" font-size="7" font-weight="normal" text-anchor="middle" >1</text><text x="291.5" y="458.5" fill="#7070ff" font-size="7" font-weight="normal" text-anchor="middle" >4</text><text x="305.5" y="458.5" fill="#7070ff" font-size="7" font-weight="normal" text-anchor="middle" >5</text><text x="334.5" y="427.5" fill="#7070ff" font-size="7" font-weight="normal" text-anchor="middle" >6</text><circle cx="288.5" cy="462" r="3.3" fill="none" stroke="#ff0000" stroke-width="1" shape-rendering="geometricPrecision"/><line x1="167.5" y1="340.5" x2="167.5" y2="355" stroke="#ff0000" stroke-width="1"/><line x1="167.5" y1="355" x2="167.5" y2="359" stroke="#000000" stroke-width="1"/><line x1="167.5" y1="380" x2="167.5" y2="556.5" stroke="#000000" stroke-width="1"/><polyline points="167.5,359 171.1,360.75 163.9,364.25 171.1,367.75 163.9,371.25 171.1,374.75 163.9,378.25 167.5,380" fill="none" stroke="#000000" stroke-width="1" shape-rendering="geometricPrecision"/><path d="M165.7,340.5 L167.5,338.7 L169.3,340.5 L167.5,342.3Z" fill="#ff0000"/><path d="M165.7,509.5 L167.5,507.7 L169.3,509.5 L167.5,511.3Z" fill="#000000"/><path d="M165.7,543.5 L167.5,541.7 L169.3,543.5 L167.5,545.3Z" fill="#000000"/><line x1="160.5" y1="556.5" x2="174.5" y2="556.5" stroke="#000000" stroke-width="1"/><line x1="163.0" y1="559.0" x2="172.0" y2="559.0" stroke="#000000" stroke-width="1"/><line x1="165.5" y1="561.5" x2="169.5" y2="561.5" stroke="#000000" stroke-width="1"/><line x1="167.5" y1="340.5" x2="187.5" y2="340.5" stroke="#ff0000" stroke-width="1"/><line x1="187.5" y1="311" x2="187.5" y2="320" stroke="#000000" stroke-width="1"/><line x1="187.5" y1="320" x2="187.5" y2="348" stroke="#ff0000" stroke-width="1"/><line x1="187.5" y1="348" x2="187.5" y2="353.5" stroke="#000000" stroke-width="1"/><line x1="187.5" y1="374.5" x2="187.5" y2="381.5" stroke="#000000" stroke-width="1"/><line x1="187.5" y1="381.5" x2="187.5" y2="449" stroke="#ff0000" stroke-width="1"/><line x1="187.5" y1="449" x2="187.5" y2="462.5" stroke="#000000" stroke-width="1"/><line x1="187.5" y1="467" x2="187.5" y2="509.5" stroke="#000000" stroke-width="1"/><polyline points="187.5,353.5 191.1,355.25 183.9,358.75 191.1,362.25 183.9,365.75 191.1,369.25 183.9,372.75 187.5,374.5" fill="none" stroke="#000000" stroke-width="1" shape-rendering="geometricPrecision"/><line x1="180.0" y1="462.5" x2="195.0" y2="462.5" stroke="#000000" stroke-width="2"/><line x1="180.0" y1="466.8" x2="195.0" y2="466.8" stroke="#000000" stroke-width="2"/><line x1="167.5" y1="509.5" x2="187.5" y2="509.5" stroke="#000000" stroke-width="1"/><line x1="201" y1="311" x2="201" y2="408.5" stroke="#000000" stroke-width="1"/><line x1="214.5" y1="311" x2="214.5" y2="320.5" stroke="#000000" stroke-width="1"/><rect x="180.5" y="286.5" width="40" height="26" fill="#c0dcc0" stroke="#000000"/><rect x="182" y="290" width="11" height="8" fill="#fff" stroke="none"/><rect x="182.5" y="291" width="10" height="5.5" fill="#c4c4c4" stroke="none"/><rect x="195" y="290" width="11" height="8" fill="#fff" stroke="none"/><rect x="195.5" y="291" width="10" height="5.5" fill="#c4c4c4" stroke="none"/><rect x="209" y="290" width="11" height="8" fill="#fff" stroke="none"/><rect x="209.5" y="291" width="10" height="5.5" fill="#c4c4c4" stroke="none"/></g><path d="M183.5,296 L185.5,293.5 L187.5,295 L189.5,293.5 L191.5,294.5 M196.5,294.5 Q198,296.5 200,295.5 L203,292.5 Q204.5,292 205.5,294 M210.5,296 L212.5,296 L212.5,293 L215,293 L215,296 L216.5,296 L216.5,293 L218.5,293" fill="none" stroke="#000" stroke-width="1"/><g shape-rendering="crispEdges"><circle cx="187.5" cy="309" r="2" fill="#888" stroke="#000000" stroke-width="1" shape-rendering="geometricPrecision"/><circle cx="201" cy="309" r="2" fill="#888" stroke="#000000" stroke-width="1" shape-rendering="geometricPrecision"/><circle cx="214.5" cy="309" r="2" fill="#888" stroke="#000000" stroke-width="1" shape-rendering="geometricPrecision"/><line x1="185" y1="304.5" x2="190" y2="304.5" stroke="#000000" stroke-width="1"/><line x1="187.5" y1="302" x2="187.5" y2="307" stroke="#000000" stroke-width="1"/><line x1="212" y1="304.5" x2="217" y2="304.5" stroke="#000000" stroke-width="1"/><text x="200" y="281.7" fill="#000000" font-size="9" font-weight="normal" text-anchor="middle" font-family="Liberation Serif, serif" fill="#222" stroke="#222" stroke-width="0.35" letter-spacing="0.3">XFG1</text><line x1="247.5" y1="435.5" x2="247.5" y2="483" stroke="#ff0000" stroke-width="1"/><line x1="247.5" y1="483" x2="247.5" y2="489.5" stroke="#000000" stroke-width="1"/><line x1="247.5" y1="508.5" x2="247.5" y2="516" stroke="#000000" stroke-width="1"/><line x1="247.5" y1="516" x2="247.5" y2="569.5" stroke="#ff0000" stroke-width="1"/><line x1="247.5" y1="569.5" x2="247.5" y2="577" stroke="#000000" stroke-width="1"/><line x1="247.5" y1="597" x2="247.5" y2="603.5" stroke="#000000" stroke-width="1"/><line x1="247.5" y1="603.5" x2="247.5" y2="624.5" stroke="#ff0000" stroke-width="1"/><polyline points="247.5,489.5 251.1,491.0833333333333 243.9,494.25 251.1,497.4166666666667 243.9,500.5833333333333 251.1,503.75 243.9,506.9166666666667 247.5,508.5" fill="none" stroke="#000000" stroke-width="1" shape-rendering="geometricPrecision"/><polyline points="247.5,577 251.1,578.6666666666666 243.9,582.0 251.1,585.3333333333334 243.9,588.6666666666666 251.1,592.0 243.9,595.3333333333334 247.5,597" fill="none" stroke="#000000" stroke-width="1" shape-rendering="geometricPrecision"/><path d="M245.7,475.5 L247.5,473.7 L249.3,475.5 L247.5,477.3Z" fill="#ff0000"/><path d="M245.7,543.5 L247.5,541.7 L249.3,543.5 L247.5,545.3Z" fill="#ff0000"/><line x1="247.5" y1="624.5" x2="747.5" y2="624.5" stroke="#ff0000" stroke-width="1"/><line x1="167.5" y1="543.5" x2="201" y2="543.5" stroke="#000000" stroke-width="1"/><line x1="206" y1="543.5" x2="220.5" y2="543.5" stroke="#000000" stroke-width="1"/><line x1="220.5" y1="543.5" x2="247.5" y2="543.5" stroke="#ff0000" stroke-width="1"/><line x1="201" y1="536.5" x2="201" y2="550.5" stroke="#000000" stroke-width="2"/><line x1="206" y1="536.5" x2="206" y2="550.5" stroke="#000000" stroke-width="2"/><line x1="247.5" y1="475.5" x2="302.5" y2="475.5" stroke="#ff0000" stroke-width="1"/><line x1="302.5" y1="475.5" x2="316.8" y2="475.5" stroke="#000000" stroke-width="1"/><line x1="336" y1="475.5" x2="350.5" y2="475.5" stroke="#000000" stroke-width="1"/><line x1="350.5" y1="475.5" x2="356" y2="475.5" stroke="#ff0000" stroke-width="1"/><polyline points="316.8,475.5 318.40000000000003,471.9 321.6,479.1 324.8,471.9 328.0,479.1 331.2,471.9 334.4,479.1 336,475.5" fill="none" stroke="#000000" stroke-width="1" shape-rendering="geometricPrecision"/><line x1="316" y1="484" x2="336" y2="466" stroke="#000000" stroke-width="1"/><path d="M336,466 L334.5,469.7 L332.2,467.1Z" fill="#000000"/><line x1="288.5" y1="465.5" x2="288.5" y2="571" stroke="#ff0000" stroke-width="1"/><line x1="288.5" y1="571" x2="288.5" y2="578" stroke="#000000" stroke-width="1"/><line x1="288.5" y1="597" x2="288.5" y2="603.5" stroke="#000000" stroke-width="1"/><line x1="288.5" y1="603.5" x2="288.5" y2="617.5" stroke="#ff0000" stroke-width="1"/><polyline points="288.5,578 292.1,579.5833333333334 284.9,582.75 292.1,585.9166666666666 284.9,589.0833333333334 292.1,592.25 284.9,595.4166666666666 288.5,597" fill="none" stroke="#000000" stroke-width="1" shape-rendering="geometricPrecision"/><path d="M286.7,475.5 L288.5,473.7 L290.3,475.5 L288.5,477.3Z" fill="#ff0000"/><path d="M286.7,516 L288.5,514.2 L290.3,516 L288.5,517.8Z" fill="#ff0000"/><path d="M286.7,556.5 L288.5,554.7 L290.3,556.5 L288.5,558.3Z" fill="#ff0000"/><line x1="288.5" y1="617.5" x2="727.5" y2="617.5" stroke="#ff0000" stroke-width="1"/><line x1="288.5" y1="516" x2="345.5" y2="516" stroke="#ff0000" stroke-width="1"/><line x1="352.5" y1="516" x2="363" y2="516" stroke="#0000ff" stroke-width="1"/><line x1="372" y1="516" x2="390.5" y2="516" stroke="#0000ff" stroke-width="1"/><line x1="390.5" y1="516" x2="430.5" y2="516" stroke="#000000" stroke-width="1"/><circle cx="349" cy="516" r="3.3" fill="none" stroke="#ff0000" stroke-width="1" shape-rendering="geometricPrecision"/><path d="M363.5,509.5 L363.5,522.5 L372.5,516Z" fill="#0000ff"/><polyline points="370,508 372.5,509.5 372.5,522.5 375,524" fill="none" stroke="#0000ff" stroke-width="1"/><line x1="288.5" y1="556.5" x2="309.5" y2="556.5" stroke="#ff0000" stroke-width="1"/><line x1="309.5" y1="556.5" x2="321.5" y2="556.5" stroke="#000000" stroke-width="1"/><line x1="327" y1="556.5" x2="430.5" y2="556.5" stroke="#000000" stroke-width="1"/><path d="M320.0,550.0 Q323.0,556.5 320.0,563.0" fill="none" stroke="#000000" stroke-width="2"/><line x1="326.5" y1="550.0" x2="326.5" y2="563.0" stroke="#000000" stroke-width="2"/><text x="333.5" y="564.7" fill="#000000" font-size="9" font-weight="bold" text-anchor="middle" >+</text><line x1="511.5" y1="469.5" x2="511.5" y2="490" stroke="#000000" stroke-width="1"/><line x1="511.5" y1="494.5" x2="511.5" y2="508.5" stroke="#000000" stroke-width="1"/><line x1="511.5" y1="508.5" x2="511.5" y2="563.5" stroke="#ff0000" stroke-width="1"/><line x1="504.0" y1="490" x2="519.0" y2="490" stroke="#000000" stroke-width="2"/><line x1="504.0" y1="494.3" x2="519.0" y2="494.3" stroke="#000000" stroke-width="2"/><line x1="511.5" y1="563.5" x2="552.5" y2="563.5" stroke="#ff0000" stroke-width="1"/><polyline points="552.5,516.5 579.5,516.5 579.5,583.5 612.5,583.5" fill="none" stroke="#ff0000" stroke-width="1"/><line x1="612.5" y1="583.5" x2="624.5" y2="583.5" stroke="#000000" stroke-width="1"/><line x1="633.5" y1="469.5" x2="633.5" y2="489.5" stroke="#000000" stroke-width="1"/><line x1="633.5" y1="508.5" x2="633.5" y2="523" stroke="#000000" stroke-width="1"/><line x1="633.5" y1="523" x2="633.5" y2="557" stroke="#ff80ff" stroke-width="1"/><line x1="633.5" y1="557" x2="633.5" y2="574.5" stroke="#000000" stroke-width="1"/><line x1="633.5" y1="593" x2="633.5" y2="617.5" stroke="#000000" stroke-width="1"/><polyline points="633.5,489.5 637.1,491.0833333333333 629.9,494.25 637.1,497.4166666666667 629.9,500.5833333333333 637.1,503.75 629.9,506.9166666666667 633.5,508.5" fill="none" stroke="#000000" stroke-width="1" shape-rendering="geometricPrecision"/><line x1="625.5" y1="508" x2="643.5" y2="490.5" stroke="#000000" stroke-width="1"/><path d="M643.5,490.5 L642.1,494.3 L639.7,491.8Z" fill="#000000"/><path d="M631.7,617.5 L633.5,615.7 L635.3,617.5 L633.5,619.3Z" fill="#ff0000"/><path d="M631.7,543 L633.5,541.2 L635.3,543 L633.5,544.8Z" fill="#00b4b4"/><line x1="624.5" y1="575.5" x2="624.5" y2="593" stroke="#000000" stroke-width="1"/><line x1="624.5" y1="579" x2="633.5" y2="574.5" stroke="#000000" stroke-width="1"/><line x1="624.5" y1="589" x2="633.5" y2="593" stroke="#000000" stroke-width="1"/><path d="M627.2,578.5 L628.9,575.8 L630.4,578.5Z" fill="#000000" shape-rendering="geometricPrecision"/><line x1="633.5" y1="543" x2="640" y2="543" stroke="#ff80ff" stroke-width="1"/><line x1="640" y1="543" x2="652.5" y2="543" stroke="#000000" stroke-width="1"/><circle cx="658" cy="542.6" r="11.7" fill="none" stroke="#000000" stroke-width="1" shape-rendering="geometricPrecision"/><line x1="652.5" y1="536" x2="652.5" y2="552.5" stroke="#000000" stroke-width="1"/><line x1="652.5" y1="539" x2="660.5" y2="532" stroke="#000000" stroke-width="1"/><line x1="652.5" y1="548" x2="660.5" y2="554" stroke="#000000" stroke-width="1"/><path d="M656.9,535.1 L658.0,532.1 L660.0,534.5Z" fill="#000000" shape-rendering="geometricPrecision"/><line x1="673.5" y1="563.5" x2="673.5" y2="598" stroke="#000000" stroke-width="1"/><line x1="673.5" y1="604" x2="673.5" y2="617.5" stroke="#000000" stroke-width="1"/><line x1="666.5" y1="598" x2="680.5" y2="598" stroke="#000000" stroke-width="2"/><path d="M666.5,605.9 Q673.5,602.9 680.5,605.9" fill="none" stroke="#000000" stroke-width="2"/><text x="668.5" y="596.7" fill="#000000" font-size="9" font-weight="bold" text-anchor="middle" >+</text><polyline points="673.5,563.5 714.5,563.5 714.5,529.5 727.5,529.5" fill="none" stroke="#000000" stroke-width="1"/><path d="M671.7,617.5 L673.5,615.7 L675.3,617.5 L673.5,619.3Z" fill="#000000"/><text x="621.5" y="238.7" fill="#000000" font-size="9" font-weight="bold" text-anchor="middle" >+</text><text x="271" y="301.2" fill="#000000" font-size="9" font-weight="bold" text-anchor="middle" >+</text></g><text x="228.6" y="260.2" fill="#000000" font-size="10" font-weight="bold" text-anchor="middle" >R020</text><text x="228.6" y="276.0" fill="#000000" font-size="10" font-weight="bold" text-anchor="middle" >2kΩ</text><text x="276.7" y="281.6" fill="#000000" font-size="10" font-weight="bold" text-anchor="middle" >C6</text><text x="277.8" y="311.3" fill="#000000" font-size="10" font-weight="bold" text-anchor="middle" >1μF</text><text x="323.2" y="256.7" fill="#0000ff" font-size="10" font-weight="bold" text-anchor="middle" >Q2</text><text x="312" y="270.4" fill="#0000ff" font-size="10" font-weight="bold" text-anchor="middle" >2N5401</text><text x="381" y="270.4" fill="#0000ff" font-size="10" font-weight="bold" text-anchor="middle" >Q3</text><text x="385" y="284.0" fill="#0000ff" font-size="10" font-weight="bold" text-anchor="middle" >2N5401</text><text x="389" y="234.3" fill="#000000" font-size="10" font-weight="bold" text-anchor="middle" >R09</text><text x="391.4" y="247.9" fill="#000000" font-size="10" font-weight="bold" text-anchor="middle" >200Ω</text><text x="394.6" y="259.6" fill="#000000" font-size="10" font-weight="bold" text-anchor="middle" >Key=A</text><text x="429" y="247.9" fill="#000000" font-size="10" font-weight="bold" text-anchor="middle" >41 %</text><text x="392.4" y="319.2" fill="#000000" font-size="10" font-weight="bold" text-anchor="middle" >R010</text><text x="392.2" y="341.0" fill="#000000" font-size="10" font-weight="bold" text-anchor="middle" >20Ω</text><text x="419" y="337.9" fill="#000000" font-size="10" font-weight="bold" text-anchor="middle" >R011</text><text x="419" y="359.6" fill="#000000" font-size="10" font-weight="bold" text-anchor="middle" >3k9Ω</text><text x="312.8" y="315.3" fill="#000000" font-size="10" font-weight="bold" text-anchor="middle" >R08</text><text x="325.6" y="339.3" fill="#000000" font-size="10" font-weight="bold" text-anchor="middle" >6k8Ω</text><text x="286.3" y="336.1" fill="#0000ff" font-size="10" font-weight="bold" text-anchor="middle" >D1</text><text x="293.6" y="364.5" fill="#0000ff" font-size="10" font-weight="bold" text-anchor="middle" >BZX55C15</text><text x="467.3" y="239.9" fill="#000000" font-size="10" font-weight="bold" text-anchor="middle" >R012</text><text x="468" y="253.6" fill="#000000" font-size="10" font-weight="bold" text-anchor="middle" >240Ω</text><text x="570" y="256.7" fill="#0000ff" font-size="10" font-weight="bold" text-anchor="middle" >Q5</text><text x="586" y="270.4" fill="#0000ff" font-size="10" font-weight="bold" text-anchor="middle" >IRF9530N</text><text x="590" y="284.8" fill="#000000" font-size="10" font-weight="bold" text-anchor="middle" >R013</text><text x="587.3" y="313.6" fill="#000000" font-size="10" font-weight="bold" text-anchor="middle" >50Ω</text><text x="565" y="324.1" fill="#0000ff" font-size="10" font-weight="bold" text-anchor="middle" >D3</text><text x="576.3" y="337.6" fill="#0000ff" font-size="10" font-weight="bold" text-anchor="middle" >1N4148</text><text x="483.3" y="317.6" fill="#0000ff" font-size="10" font-weight="bold" text-anchor="middle" >Q4</text><text x="495.3" y="329.6" fill="#0000ff" font-size="10" font-weight="bold" text-anchor="middle" >2SK170</text><text x="641.3" y="233.5" fill="#000000" font-size="10" font-weight="bold" text-anchor="middle" >C8</text><text x="643.7" y="245.5" fill="#000000" font-size="10" font-weight="bold" text-anchor="middle" >1μF</text><text x="699.9" y="250.3" fill="#000000" font-size="10" font-weight="bold" text-anchor="middle" >V1</text><text x="699" y="263.9" fill="#000000" font-size="10" font-weight="bold" text-anchor="middle" >33V</text><text x="158" y="350.0" fill="#000000" font-size="10" font-weight="bold" text-anchor="middle" >R01</text><text x="163.6" y="397.3" fill="#000000" font-size="10" font-weight="bold" text-anchor="middle" >50kΩ</text><text x="215" y="369.3" fill="#000000" font-size="10" font-weight="bold" text-anchor="middle" >R02</text><text x="215" y="382.9" fill="#000000" font-size="10" font-weight="bold" text-anchor="middle" >2kΩ</text><text x="292.8" y="410.2" fill="#0000ff" font-size="10" font-weight="bold" text-anchor="middle" >U1</text><text x="298.4" y="425.4" fill="#0000ff" font-size="10" font-weight="bold" text-anchor="middle" >AD744JN</text><text x="377.8" y="451.1" fill="#000000" font-size="10" font-weight="bold" text-anchor="middle" >C3</text><text x="376.2" y="464.7" fill="#000000" font-size="10" font-weight="bold" text-anchor="middle" >1μ5F</text><text x="324.8" y="461.5" fill="#000000" font-size="10" font-weight="bold" text-anchor="middle" >R06</text><text x="372.2" y="412.6" fill="#000000" font-size="10" font-weight="bold" text-anchor="middle" >R07</text><text x="377.8" y="435.0" fill="#000000" font-size="10" font-weight="bold" text-anchor="middle" >22Ω</text><text x="441.5" y="393.1" fill="#0000ff" font-size="10" font-weight="bold" text-anchor="middle" >Q1</text><text x="455" y="405.6" fill="#0000ff" font-size="10" font-weight="bold" text-anchor="middle" >2SK170</text><text x="215.8" y="426.2" fill="#000000" font-size="10" font-weight="bold" text-anchor="middle" >R03</text><text x="225.4" y="448.7" fill="#000000" font-size="10" font-weight="bold" text-anchor="middle" >100Ω</text><text x="202.1" y="455.9" fill="#000000" font-size="10" font-weight="bold" text-anchor="middle" >C1</text><text x="211" y="467.9" fill="#000000" font-size="10" font-weight="bold" text-anchor="middle" >150pF</text><text x="516.2" y="402.1" fill="#000000" font-size="10" font-weight="bold" text-anchor="middle" >C4</text><text x="507.4" y="413.4" fill="#000000" font-size="10" font-weight="bold" text-anchor="middle" >100pF</text><text x="507.4" y="425.4" fill="#000000" font-size="10" font-weight="bold" text-anchor="middle" >Key=A</text><text x="574" y="402.1" fill="#000000" font-size="10" font-weight="bold" text-anchor="middle" >R014</text><text x="571.5" y="419.0" fill="#000000" font-size="10" font-weight="bold" text-anchor="middle" >20Ω</text><text x="577.2" y="430.2" fill="#000000" font-size="10" font-weight="bold" text-anchor="middle" >Key=A</text><text x="541" y="413.4" fill="#000000" font-size="10" font-weight="bold" text-anchor="middle" >56 %</text><text x="613.2" y="419.0" fill="#000000" font-size="10" font-weight="bold" text-anchor="middle" >64 %</text><text x="678.2" y="371.6" fill="#000000" font-size="10" font-weight="bold" text-anchor="middle" >Q6</text><text x="691.8" y="390.1" fill="#000000" font-size="10" font-weight="bold" text-anchor="middle" >2SC5200</text><text x="703.9" y="446.3" fill="#000000" font-size="10" font-weight="bold" text-anchor="middle" >10uH</text><text x="703" y="457.5" fill="#000000" font-size="10" font-weight="bold" text-anchor="middle" >Key=A</text><text x="487.3" y="461.5" fill="#000000" font-size="10" font-weight="bold" text-anchor="middle" >R016</text><text x="485.7" y="482.4" fill="#000000" font-size="10" font-weight="bold" text-anchor="middle" >510Ω</text><text x="571.5" y="486.3" fill="#0000ff" font-size="10" font-weight="bold" text-anchor="middle" >D4</text><text x="576.3" y="498.6" fill="#0000ff" font-size="10" font-weight="bold" text-anchor="middle" >1N4148</text><text x="761.4" y="482.1" fill="#000000" font-size="10" font-weight="bold" text-anchor="middle" >R22</text><text x="191.7" y="529.6" fill="#000000" font-size="10" font-weight="bold" text-anchor="middle" >C2</text><text x="197.3" y="560.1" fill="#000000" font-size="10" font-weight="bold" text-anchor="middle" >8μF</text><text x="231.8" y="509.9" fill="#000000" font-size="10" font-weight="bold" text-anchor="middle" >R04</text><text x="231.8" y="521.9" fill="#000000" font-size="10" font-weight="bold" text-anchor="middle" >27kΩ</text><text x="260.7" y="577.3" fill="#000000" font-size="10" font-weight="bold" text-anchor="middle" >R05</text><text x="264.7" y="589.3" fill="#000000" font-size="10" font-weight="bold" text-anchor="middle" >27kΩ</text><text x="317.6" y="494.6" fill="#000000" font-size="10" font-weight="bold" text-anchor="middle" >200kΩ</text><text x="317.6" y="506.2" fill="#000000" font-size="10" font-weight="bold" text-anchor="middle" >Key=A</text><text x="352.9" y="494.6" fill="#000000" font-size="10" font-weight="bold" text-anchor="middle" >14 %</text><text x="381.8" y="503.5" fill="#0000ff" font-size="10" font-weight="bold" text-anchor="middle" >D2</text><text x="381" y="533.1" fill="#0000ff" font-size="10" font-weight="bold" text-anchor="middle" >BZX55C15</text><text x="409.9" y="489.5" fill="#000000" font-size="10" font-weight="bold" text-anchor="middle" >R015</text><text x="413.9" y="514.7" fill="#000000" font-size="10" font-weight="bold" text-anchor="middle" >180Ω</text><text x="324.8" y="544.4" fill="#000000" font-size="10" font-weight="bold" text-anchor="middle" >C7</text><text x="325.6" y="574.0" fill="#000000" font-size="10" font-weight="bold" text-anchor="middle" >1μF</text><text x="311.2" y="590.9" fill="#000000" font-size="10" font-weight="bold" text-anchor="middle" >R021</text><text x="309.6" y="602.9" fill="#000000" font-size="10" font-weight="bold" text-anchor="middle" >2kΩ</text><text x="493.7" y="496.2" fill="#000000" font-size="10" font-weight="bold" text-anchor="middle" >C5</text><text x="491" y="509.9" fill="#000000" font-size="10" font-weight="bold" text-anchor="middle" >22μF</text><text x="523.4" y="538.3" fill="#000000" font-size="10" font-weight="bold" text-anchor="middle" >R017</text><text x="522.6" y="555.6" fill="#000000" font-size="10" font-weight="bold" text-anchor="middle" >1000Ω</text><text x="523.4" y="566.5" fill="#000000" font-size="10" font-weight="bold" text-anchor="middle" >Key=A</text><text x="558.7" y="572.4" fill="#000000" font-size="10" font-weight="bold" text-anchor="middle" >30 %</text><text x="519.4" y="592.2" fill="#000000" font-size="10" font-weight="bold" text-anchor="middle" >R018</text><text x="516.2" y="601.3" fill="#000000" font-size="10" font-weight="bold" text-anchor="middle" >1000Ω</text><text x="517" y="612.6" fill="#000000" font-size="10" font-weight="bold" text-anchor="middle" >Key=A</text><text x="605.2" y="504.3" fill="#000000" font-size="10" font-weight="bold" text-anchor="middle" >R019</text><text x="604.4" y="525.4" fill="#000000" font-size="10" font-weight="bold" text-anchor="middle" >50Ω</text><text x="610.8" y="536.6" fill="#000000" font-size="10" font-weight="bold" text-anchor="middle" >Key=A</text><text x="646.9" y="525.4" fill="#000000" font-size="10" font-weight="bold" text-anchor="middle" >33 %</text><text x="678.2" y="533.9" fill="#000000" font-size="10" font-weight="bold" text-anchor="middle" >Q8</text><text x="691.8" y="547.3" fill="#000000" font-size="10" font-weight="bold" text-anchor="middle" >2SA1943</text><text x="599.6" y="587.7" fill="#000000" font-size="10" font-weight="bold" text-anchor="middle" >Q7</text><text x="591.6" y="599.7" fill="#000000" font-size="10" font-weight="bold" text-anchor="middle" >2SB649</text><text x="697.5" y="486.3" fill="#000000" font-size="10" font-weight="bold" text-anchor="middle" >18 %</text><text x="552.2" y="627.8" fill="#000000" font-size="10" font-weight="bold" text-anchor="middle" >20 %</text><text x="687.8" y="590.9" fill="#000000" font-size="10" font-weight="bold" text-anchor="middle" >C9</text><text x="690.2" y="602.1" fill="#000000" font-size="10" font-weight="bold" text-anchor="middle" >1μF</text><text x="719.9" y="601.3" fill="#000000" font-size="10" font-weight="bold" text-anchor="middle" >V2</text><text x="712.7" y="614.9" fill="#000000" font-size="10" font-weight="bold" text-anchor="middle" >33V</text><text x="762" y="499.7" fill="#000000" font-size="13" font-weight="bold" text-anchor="middle" >4Ω</text><text x="706.3" y="433.4" fill="#000000" font-size="10" font-weight="bold" text-anchor="middle" >Пробник2</text><text x="710.5" y="433.1" fill="#000000" font-size="10" font-weight="bold" text-anchor="middle" >L2</text><text x="706.3" y="500.3" fill="#000000" font-size="10" font-weight="bold" text-anchor="middle" >Пробник3</text><text x="801" y="440.6" fill="#000000" font-size="10" font-weight="bold" text-anchor="middle" >Пробник5</text><line x1="667.3" y1="428.8" x2="662.2" y2="435.6" stroke="#a8d8a8" stroke-width="3" shape-rendering="geometricPrecision"/><path d="M660.4,438 L660.7,431.5 L662.2,435.6 L666.6,435.9Z" fill="#6a9a6a" shape-rendering="geometricPrecision"/><circle cx="670.3" cy="423.3" r="5.7" fill="#fff" stroke="#6a9a6a" stroke-width="1.1" shape-rendering="geometricPrecision"/><text x="670.3" y="426.1" font-size="8" text-anchor="middle" fill="#6a9a6a" font-family="Liberation Serif, serif" font-weight="bold">A</text><line x1="667.5" y1="495.5" x2="662.4" y2="502.1" stroke="#a8d8a8" stroke-width="3" shape-rendering="geometricPrecision"/><path d="M660.6,504.5 L661.0,498.0 L662.4,502.1 L666.8,502.5Z" fill="#6a9a6a" shape-rendering="geometricPrecision"/><circle cx="670.5" cy="490" r="5.7" fill="#fff" stroke="#6a9a6a" stroke-width="1.1" shape-rendering="geometricPrecision"/><text x="670.5" y="492.8" font-size="8" text-anchor="middle" fill="#6a9a6a" font-family="Liberation Serif, serif" font-weight="bold">A</text><line x1="761.6" y1="436.9" x2="757.0" y2="439.9" stroke="#a8d8a8" stroke-width="3" shape-rendering="geometricPrecision"/><path d="M754.5,441.5 L757.0,435.5 L757.0,439.9 L761.0,441.7Z" fill="#6a9a6a" shape-rendering="geometricPrecision"/><circle cx="764.6" cy="431.4" r="5.7" fill="#fff" stroke="#6a9a6a" stroke-width="1.1" shape-rendering="geometricPrecision"/><text x="764.6" y="434.2" font-size="8" text-anchor="middle" fill="#6a9a6a" font-family="Liberation Serif, serif" font-weight="bold">W</text><line x1="829.3" y1="464.2" x2="824.9" y2="467.7" stroke="#a8d8a8" stroke-width="3" shape-rendering="geometricPrecision"/><path d="M822.5,469.5 L824.5,463.3 L824.9,467.7 L829.0,469.1Z" fill="#6a9a6a" shape-rendering="geometricPrecision"/><circle cx="832.3" cy="458.7" r="5.7" fill="#fff" stroke="#6a9a6a" stroke-width="1.1" shape-rendering="geometricPrecision"/><text x="832.3" y="461.5" font-size="8" text-anchor="middle" fill="#6a9a6a" font-family="Liberation Serif, serif" font-weight="bold">V</text><g stroke="#7a9ae0" stroke-width="0.8"><line x1="675" y1="428" x2="755.5" y2="509.5"/><line x1="675" y1="496" x2="755" y2="594.5"/><line x1="766.5" y1="424" x2="774.5" y2="389.5"/><polyline fill="none" points="838.5,459.5 860,460 884.5,462"/></g><rect x="774.5" y="356.5" width="81" height="33" fill="#ffffc0" stroke="#8aa0e8"/><text x="779.5" y="370.0" font-size="12" fill="#000" letter-spacing="-0.15">P: 212 W</text><text x="779.5" y="385.3" font-size="12" fill="#000" letter-spacing="-0.15">P(avg): 117 W</text><rect x="885.0" y="378.5" width="93.5" height="83" fill="#ffffc0" stroke="#8aa0e8"/><text x="889.2" y="391.6" font-size="12" fill="#000" letter-spacing="-0.15">V: -29.5 V</text><text x="889.2" y="406.9" font-size="12" fill="#000" letter-spacing="-0.15">V(p-p): 61.2 V</text><text x="889.2" y="422.1" font-size="12" fill="#000" letter-spacing="-0.15">V(rms): 21.6 V</text><text x="889.2" y="437.0" font-size="12" fill="#000" letter-spacing="-0.15">V(dc): 15.8 mV</text><text x="889.2" y="451.8" font-size="12" fill="#000" letter-spacing="-0.15">V(freq): 20.0</text><text x="889.2" y="459.3" font-size="12" fill="#000" letter-spacing="-0.15">. . .</text><rect x="755.5" y="509.5" width="88" height="82" fill="#ffffc0" stroke="#8aa0e8"/><text x="760.1" y="522.9" font-size="12" fill="#000" letter-spacing="-0.15">I: 155 uA</text><text x="760.1" y="538.3" font-size="12" fill="#000" letter-spacing="-0.15">I(p-p): 7.81 A</text><text x="760.1" y="553.4" font-size="12" fill="#000" letter-spacing="-0.15">I(rms): 3.90 A</text><text x="760.1" y="568.3" font-size="12" fill="#000" letter-spacing="-0.15">I(dc): 2.48 A</text><text x="760.1" y="582.8" font-size="12" fill="#000" letter-spacing="-0.15">I(freq): 20.0</text><text x="760.1" y="590.3" font-size="12" fill="#000" letter-spacing="-0.15">. . .</text><rect x="755.0" y="594.5" width="87.5" height="82" fill="#ffffc0" stroke="#8aa0e8"/><text x="759.8" y="608.0" font-size="12" fill="#000" letter-spacing="-0.15">I: 7.42 A</text><text x="759.8" y="623.4" font-size="12" fill="#000" letter-spacing="-0.15">I(p-p): 7.78 A</text><text x="759.8" y="638.3" font-size="12" fill="#000" letter-spacing="-0.15">I(rms): 3.89 A</text><text x="759.8" y="653.0" font-size="12" fill="#000" letter-spacing="-0.15">I(dc): 2.47 A</text><text x="759.8" y="667.8" font-size="12" fill="#000" letter-spacing="-0.15">I(freq): 20.0</text><text x="759.8" y="675.3" font-size="12" fill="#000" letter-spacing="-0.15">. . .</text></svg>
<div class="win" style="left:1020px;top:9px;width:713px;height:254px">
<div class="tb" style="height:31px"></div>
<div class="ttl" style="left:8px;top:8.0px;color:#999;font-size:13px">Плоттер Боде-XBP1</div>
<svg class="a" style="right:9px;top:9.5px" width="12" height="12"><path d="M0.5,0.5 L11.5,11.5 M11.5,0.5 L0.5,11.5" stroke="#777" stroke-width="1.1"/></svg>
</div>
<svg class="a" style="left:0;top:0" width="1808" height="893" font-family="Liberation Sans, sans-serif"><rect x="1022" y="41" width="464" height="200" fill="#fff"/><rect x="1022" y="41" width="463" height="199" fill="#696969"/><rect x="1023" y="42" width="462" height="197" fill="#a0a0a0"/><rect x="1024" y="43" width="460" height="195" fill="#fff"/><rect x="1024" y="43" width="459" height="194" fill="#000"/><g shape-rendering="crispEdges" stroke="#d8d8d8" stroke-dasharray="3,3" stroke-width="1"><line x1="1412.8" y1="49" x2="1412.8" y2="230"/><line x1="1346.2" y1="49" x2="1346.2" y2="230"/><line x1="1279.5" y1="49" x2="1279.5" y2="230"/><line x1="1212.8" y1="49" x2="1212.8" y2="230"/><line x1="1146.1" y1="49" x2="1146.1" y2="230"/><line x1="1079.5" y1="49" x2="1079.5" y2="230"/><line x1="1034" y1="93.9" x2="1479" y2="93.9"/><line x1="1034" y1="139.4" x2="1479" y2="139.4"/><line x1="1034" y1="184.8" x2="1479" y2="184.8"/><line x1="1034" y1="48.5" x2="1479" y2="48.5"/><line x1="1479.5" y1="48.5" x2="1479.5" y2="230"/></g><g shape-rendering="crispEdges" stroke="#fff" stroke-width="1.6"><line x1="1033.5" y1="48" x2="1033.5" y2="231"/><line x1="1033" y1="230.5" x2="1480" y2="230.5"/></g><line x1="1029" y1="139.5" x2="1033" y2="139.5" stroke="#fff"/><polyline points="1034,116.5 1200,116.5 1222.5,117.3 1253,117.6 1269,118.9 1279.4,120 1296,122 1312.3,126 1325,130.9 1336.3,137.3 1346.3,143 1360.4,147.4 1376.4,151.8 1400.5,163 1412.5,166.2 1440.6,172.6 1479,185" fill="none" stroke="#ffff00" stroke-width="1.2"/><line x1="1222.5" y1="44" x2="1222.5" y2="238" stroke="#00e0e0" stroke-width="1.3"/><path d="M1218,44 L1227,44 L1222.5,49Z" fill="#00e0e0"/><path d="M1222.5,112.5 L1226,115.5 L1225,120 L1220,120 L1219,115.5Z" fill="none" stroke="#00e0e0" stroke-width="1"/></svg>
<div class="btn" style="left:1023px;top:243px;width:65px;height:15px;line-height:13px;color:#000;font-size:12px;background:#e1e1e1;border-color:#b9b9b9;line-height:0"><svg width="10" height="10" style="margin-top:2px"><path d="M0.5,5 L5,0.5 L5,3.6 L9.5,3.6 L9.5,6.4 L5,6.4 L5,9.5Z" fill="#000"/></svg></div>
<div class="a" style="left:1088px;top:242px;width:166px;height:17px;background:#f0f0f0;border-left:1px solid #a0a0a0;border-top:1px solid #a0a0a0;border-bottom:1px solid #fff"></div>
<div class="a" style="left:1254px;top:242px;width:162px;height:17px;background:#f0f0f0;border-left:1px solid #a0a0a0;border-top:1px solid #a0a0a0;border-bottom:1px solid #fff"></div>
<div class="t" style="left:1107px;top:245.5px;font-size:12px;color:#000;">13.798 kHz</div>
<div class="t" style="left:1267px;top:245.5px;font-size:12px;color:#000;">176.42 Deg</div>
<div class="btn" style="left:1416.5px;top:243px;width:68.0px;height:15px;line-height:13px;color:#000;font-size:12px;background:#e1e1e1;border-color:#b9b9b9;line-height:0"><svg width="10" height="10" style="margin-top:2px"><path d="M9.5,5 L5,0.5 L5,3.6 L0.5,3.6 L0.5,6.4 L5,6.4 L5,9.5Z" fill="#000"/></svg></div>
<div class="grp" style="left:1490px;top:46px;width:236px;height:162px"></div>
<div class="t" style="left:1497px;top:42px;font-size:11.5px;color:#000;background:#f0f0f0;padding:0 2px">Режим</div>
<div class="btn" style="left:1514px;top:58px;width:93px;height:18px;line-height:16px;color:#000;font-size:12px;">Амплитуда</div>
<div class="btn sel" style="left:1611px;top:58px;width:94px;height:18px;line-height:16px;color:#000;font-size:12px;">Фаза</div>
<div class="grp" style="left:1490px;top:89px;width:117px;height:86px"></div>
<div class="grp" style="left:1607px;top:89px;width:119px;height:86px"></div>
<div class="t" style="left:1495px;top:84px;font-size:11.5px;color:#000;background:#f0f0f0;padding:0 2px">По горизонтали</div>
<div class="t" style="left:1613px;top:84px;font-size:11.5px;color:#000;background:#f0f0f0;padding:0 2px">По вертикали</div>
<div class="btn sel" style="left:1503px;top:102px;width:43px;height:18px;line-height:16px;color:#000;font-size:12px;">Log</div>
<div class="btn" style="left:1550px;top:102px;width:43px;height:18px;line-height:16px;color:#000;font-size:12px;">Лин</div>
<div class="btn" style="left:1623px;top:102px;width:43px;height:18px;line-height:16px;color:#a0a0a0;font-size:12px;background:#cccccc;border-color:#bfbfbf;">Log</div>
<div class="btn sel" style="left:1670px;top:102px;width:43px;height:18px;line-height:16px;color:#000;font-size:12px;">Лин</div>
<div class="t" style="left:1492px;top:125px;font-size:12px;color:#000;">F</div>
<div class="t" style="left:1494px;top:145px;font-size:12px;color:#000;font-family:Liberation Serif,serif">I</div>
<div class="fld" style="left:1502px;top:122px;width:63px;height:20px;line-height:18px;text-align:left;padding-left:5px;font-size:12px;">100</div>
<div class="fld" style="left:1565px;top:122px;width:36px;height:20px;line-height:18px;text-align:left;padding-left:3px;font-size:12px;">MHz</div>
<div class="fld" style="left:1502px;top:142px;width:63px;height:19px;line-height:17px;text-align:left;padding-left:5px;font-size:12px;">20</div>
<div class="fld" style="left:1565px;top:142px;width:36px;height:19px;line-height:17px;text-align:left;padding-left:10px;font-size:12px;">Hz</div>
<div class="t" style="left:1612px;top:125px;font-size:12px;color:#000;">F</div>
<div class="t" style="left:1614px;top:145px;font-size:12px;color:#000;font-family:Liberation Serif,serif">I</div>
<div class="fld" style="left:1622px;top:122px;width:63px;height:20px;line-height:18px;text-align:left;padding-left:5px;font-size:12px;">720</div>
<div class="fld" style="left:1685px;top:122px;width:36px;height:20px;line-height:18px;text-align:left;padding-left:6px;font-size:12px;">Deg</div>
<div class="fld" style="left:1622px;top:142px;width:63px;height:19px;line-height:17px;text-align:left;padding-left:5px;font-size:12px;">-720</div>
<div class="fld" style="left:1685px;top:142px;width:36px;height:19px;line-height:17px;text-align:left;padding-left:6px;font-size:12px;">Deg</div>
<div class="a" style="left:1490px;top:175px;width:236px;height:1px;background:#dcdcdc"></div>
<div class="t" style="left:1497px;top:170px;font-size:11.5px;color:#000;background:#f0f0f0;padding:0 2px">Управление</div>
<div class="btn" style="left:1512px;top:187px;width:61px;height:17px;line-height:15px;color:#000;font-size:12px;">Экран</div>
<div class="btn" style="left:1577px;top:187px;width:61px;height:17px;line-height:15px;color:#000;font-size:12px;">Сохранить</div>
<div class="btn" style="left:1641px;top:187px;width:61px;height:17px;line-height:15px;color:#000;font-size:12px;">Уст...</div>
<div class="t" style="left:1509px;top:245px;font-size:13px;color:#000;">+</div>
<div class="rad dis" style="left:1519.5px;top:245.5px;width:13.0px;height:13.0px"></div>
<div class="t" style="left:1542px;top:245px;font-size:12px;color:#000;">Вх</div>
<div class="rad dis" style="left:1563.5px;top:245.5px;width:13.0px;height:13.0px"></div>
<div class="t" style="left:1582px;top:244px;font-size:12px;color:#000;">–</div>
<div class="t" style="left:1619px;top:245px;font-size:13px;color:#000;">+</div>
<div class="rad dis" style="left:1630.5px;top:245.5px;width:13.0px;height:13.0px"></div>
<div class="t" style="left:1652px;top:245px;font-size:12px;color:#000;">Вых</div>
<div class="rad dis" style="left:1677.5px;top:245.5px;width:13.0px;height:13.0px"></div>
<div class="t" style="left:1696px;top:244px;font-size:12px;color:#000;">–</div>
<svg class="a" style="left:1721px;top:250px" width="11" height="11"><g fill="#aaa"><rect x="8" y="0" width="2" height="2"/><rect x="4" y="4" width="2" height="2"/><rect x="8" y="4" width="2" height="2"/><rect x="0" y="8" width="2" height="2"/><rect x="4" y="8" width="2" height="2"/><rect x="8" y="8" width="2" height="2"/></g></svg>
<div class="win" style="left:1241px;top:303px;width:600px;height:487px">
<div class="tb" style="height:31px"></div>
<div class="ttl" style="left:8px;top:8.0px;color:#999;font-size:13px"><span style="color:#000">Осциллограф-XSC1</span></div>
<svg class="a" style="right:9px;top:9.5px" width="12" height="12"><path d="M0.5,0.5 L11.5,11.5 M11.5,0.5 L0.5,11.5" stroke="#777" stroke-width="1.1"/></svg>
</div>
<div class="a" style="left:1241px;top:303px;width:600px;height:487px;border:1px solid #5a5a5a"></div>
<svg class="a" style="left:0;top:0" width="1808" height="893"><rect x="1243" y="335" width="600" height="290" fill="#fff"/><rect x="1243" y="335" width="600" height="289" fill="#696969"/><rect x="1244" y="336" width="600" height="287" fill="#a0a0a0"/><rect x="1245" y="337" width="600" height="286" fill="#fff"/><rect x="1245" y="337" width="600" height="285" fill="#000"/><g shape-rendering="crispEdges" stroke="#d8d8d8" stroke-dasharray="3,3"><line x1="1308.5" y1="347" x2="1308.5" y2="615"/><line x1="1363.5" y1="347" x2="1363.5" y2="615"/><line x1="1418.5" y1="347" x2="1418.5" y2="615"/><line x1="1473.5" y1="347" x2="1473.5" y2="615"/><line x1="1528.5" y1="347" x2="1528.5" y2="615"/><line x1="1583.5" y1="347" x2="1583.5" y2="615"/><line x1="1638.5" y1="347" x2="1638.5" y2="615"/><line x1="1693.5" y1="347" x2="1693.5" y2="615"/><line x1="1748.5" y1="347" x2="1748.5" y2="615"/><line x1="1254" y1="390.5" x2="1803" y2="390.5"/><line x1="1254" y1="435.5" x2="1803" y2="435.5"/><line x1="1254" y1="525.5" x2="1803" y2="525.5"/><line x1="1254" y1="570.5" x2="1803" y2="570.5"/></g><g shape-rendering="crispEdges" stroke="#fff"><line x1="1253" y1="345.5" x2="1804" y2="345.5"/><line x1="1253" y1="615.5" x2="1804" y2="615.5"/><line x1="1804.5" y1="345.5" x2="1804.5" y2="616"/><line x1="1248" y1="480.5" x2="1804" y2="480.5"/><line x1="1253.5" y1="478" x2="1253.5" y2="483"/><line x1="1264.5" y1="478" x2="1264.5" y2="483"/><line x1="1275.5" y1="478" x2="1275.5" y2="483"/><line x1="1286.5" y1="478" x2="1286.5" y2="483"/><line x1="1297.5" y1="478" x2="1297.5" y2="483"/><line x1="1308.5" y1="478" x2="1308.5" y2="483"/><line x1="1319.5" y1="478" x2="1319.5" y2="483"/><line x1="1330.5" y1="478" x2="1330.5" y2="483"/><line x1="1341.5" y1="478" x2="1341.5" y2="483"/><line x1="1352.5" y1="478" x2="1352.5" y2="483"/><line x1="1363.5" y1="478" x2="1363.5" y2="483"/><line x1="1374.5" y1="478" x2="1374.5" y2="483"/><line x1="1385.5" y1="478" x2="1385.5" y2="483"/><line x1="1396.5" y1="478" x2="1396.5" y2="483"/><line x1="1407.5" y1="478" x2="1407.5" y2="483"/><line x1="1418.5" y1="478" x2="1418.5" y2="483"/><line x1="1429.5" y1="478" x2="1429.5" y2="483"/><line x1="1440.5" y1="478" x2="1440.5" y2="483"/><line x1="1451.5" y1="478" x2="1451.5" y2="483"/><line x1="1462.5" y1="478" x2="1462.5" y2="483"/><line x1="1473.5" y1="478" x2="1473.5" y2="483"/><line x1="1484.5" y1="478" x2="1484.5" y2="483"/><line x1="1495.5" y1="478" x2="1495.5" y2="483"/><line x1="1506.5" y1="478" x2="1506.5" y2="483"/><line x1="1517.5" y1="478" x2="1517.5" y2="483"/><line x1="1528.5" y1="478" x2="1528.5" y2="483"/><line x1="1539.5" y1="478" x2="1539.5" y2="483"/><line x1="1550.5" y1="478" x2="1550.5" y2="483"/><line x1="1561.5" y1="478" x2="1561.5" y2="483"/><line x1="1572.5" y1="478" x2="1572.5" y2="483"/><line x1="1583.5" y1="478" x2="1583.5" y2="483"/><line x1="1594.5" y1="478" x2="1594.5" y2="483"/><line x1="1605.5" y1="478" x2="1605.5" y2="483"/><line x1="1616.5" y1="478" x2="1616.5" y2="483"/><line x1="1627.5" y1="478" x2="1627.5" y2="483"/><line x1="1638.5" y1="478" x2="1638.5" y2="483"/><line x1="1649.5" y1="478" x2="1649.5" y2="483"/><line x1="1660.5" y1="478" x2="1660.5" y2="483"/><line x1="1671.5" y1="478" x2="1671.5" y2="483"/><line x1="1682.5" y1="478" x2="1682.5" y2="483"/><line x1="1693.5" y1="478" x2="1693.5" y2="483"/><line x1="1704.5" y1="478" x2="1704.5" y2="483"/><line x1="1715.5" y1="478" x2="1715.5" y2="483"/><line x1="1726.5" y1="478" x2="1726.5" y2="483"/><line x1="1737.5" y1="478" x2="1737.5" y2="483"/><line x1="1748.5" y1="478" x2="1748.5" y2="483"/><line x1="1759.5" y1="478" x2="1759.5" y2="483"/><line x1="1770.5" y1="478" x2="1770.5" y2="483"/><line x1="1781.5" y1="478" x2="1781.5" y2="483"/><line x1="1792.5" y1="478" x2="1792.5" y2="483"/><line x1="1803.5" y1="478" x2="1803.5" y2="483"/></g><polyline points="1254.0,524.4 1255.5,526.3 1257.0,528.2 1258.5,530.0 1260.0,531.8 1261.5,533.5 1263.0,535.1 1264.5,536.7 1266.0,538.2 1267.5,539.7 1269.0,541.0 1270.5,542.3 1272.0,543.6 1273.5,544.7 1275.0,545.8 1276.5,546.8 1278.0,547.7 1279.5,548.6 1281.0,549.3 1282.5,550.0 1284.0,550.6 1285.5,551.1 1287.0,551.6 1288.5,551.9 1290.0,552.2 1291.5,552.4 1293.0,552.5 1294.5,552.5 1296.0,552.4 1297.5,552.3 1299.0,552.0 1300.5,551.7 1302.0,551.3 1303.5,550.8 1305.0,550.3 1306.5,549.6 1308.0,548.9 1309.5,548.1 1311.0,547.2 1312.5,546.2 1314.0,545.1 1315.5,544.0 1317.0,542.8 1318.5,541.6 1320.0,540.2 1321.5,538.8 1323.0,537.3 1324.5,535.8 1326.0,534.2 1327.5,532.5 1329.0,530.7 1330.5,528.9 1332.0,527.1 1333.5,525.2 1335.0,523.2 1336.5,521.2 1338.0,519.1 1339.5,517.0 1341.0,514.9 1342.5,512.7 1344.0,510.5 1345.5,508.2 1347.0,505.9 1348.5,503.6 1350.0,501.3 1351.5,498.9 1353.0,496.5 1354.5,494.1 1356.0,491.6 1357.5,489.2 1359.0,486.7 1360.5,484.3 1362.0,481.8 1363.5,479.3 1365.0,476.9 1366.5,474.4 1368.0,472.0 1369.5,469.5 1371.0,467.1 1372.5,464.7 1374.0,462.3 1375.5,459.9 1377.0,457.5 1378.5,455.2 1380.0,452.9 1381.5,450.7 1383.0,448.4 1384.5,446.2 1386.0,444.1 1387.5,442.0 1389.0,439.9 1390.5,437.9 1392.0,435.9 1393.5,434.0 1395.0,432.2 1396.5,430.4 1398.0,428.6 1399.5,427.0 1401.0,425.3 1402.5,423.8 1404.0,422.3 1405.5,420.9 1407.0,419.5 1408.5,418.3 1410.0,417.1 1411.5,415.9 1413.0,414.9 1414.5,413.9 1416.0,413.0 1417.5,412.2 1419.0,411.4 1420.5,410.8 1422.0,410.2 1423.5,409.7 1425.0,409.3 1426.5,409.0 1428.0,408.7 1429.5,408.6 1431.0,408.5 1432.5,408.5 1434.0,408.6 1435.5,408.8 1437.0,409.1 1438.5,409.4 1440.0,409.8 1441.5,410.4 1443.0,410.9 1444.5,411.6 1446.0,412.4 1447.5,413.2 1449.0,414.1 1450.5,415.1 1452.0,416.2 1453.5,417.4 1455.0,418.6 1456.5,419.9 1458.0,421.3 1459.5,422.7 1461.0,424.2 1462.5,425.8 1464.0,427.4 1465.5,429.1 1467.0,430.9 1468.5,432.7 1470.0,434.5 1471.5,436.5 1473.0,438.4 1474.5,440.5 1476.0,442.5 1477.5,444.7 1479.0,446.8 1480.5,449.0 1482.0,451.3 1483.5,453.5 1485.0,455.8 1486.5,458.2 1488.0,460.5 1489.5,462.9 1491.0,465.3 1492.5,467.7 1494.0,470.2 1495.5,472.6 1497.0,475.1 1498.5,477.5 1500.0,480.0 1501.5,482.5 1503.0,484.9 1504.5,487.4 1506.0,489.9 1507.5,492.3 1509.0,494.7 1510.5,497.1 1512.0,499.5 1513.5,501.9 1515.0,504.2 1516.5,506.5 1518.0,508.8 1519.5,511.1 1521.0,513.3 1522.5,515.5 1524.0,517.6 1525.5,519.7 1527.0,521.7 1528.5,523.7 1530.0,525.7 1531.5,527.6 1533.0,529.4 1534.5,531.2 1536.0,532.9 1537.5,534.6 1539.0,536.2 1540.5,537.7 1542.0,539.2 1543.5,540.6 1545.0,541.9 1546.5,543.2 1548.0,544.3 1549.5,545.4 1551.0,546.5 1552.5,547.4 1554.0,548.3 1555.5,549.1 1557.0,549.8 1558.5,550.4 1560.0,551.0 1561.5,551.4 1563.0,551.8 1564.5,552.1 1566.0,552.3 1567.5,552.5 1569.0,552.5 1570.5,552.5 1572.0,552.3 1573.5,552.1 1575.0,551.8 1576.5,551.5 1578.0,551.0 1579.5,550.5 1581.0,549.8 1582.5,549.1 1584.0,548.3 1585.5,547.5 1587.0,546.5 1588.5,545.5 1590.0,544.4 1591.5,543.2 1593.0,542.0 1594.5,540.7 1596.0,539.3 1597.5,537.8 1599.0,536.3 1600.5,534.7 1602.0,533.0 1603.5,531.3 1605.0,529.5 1606.5,527.7 1608.0,525.8 1609.5,523.9 1611.0,521.9 1612.5,519.8 1614.0,517.8 1615.5,515.6 1617.0,513.4 1618.5,511.2 1620.0,509.0 1621.5,506.7 1623.0,504.4 1624.5,502.0 1626.0,499.7 1627.5,497.3 1629.0,494.9 1630.5,492.5 1632.0,490.0 1633.5,487.6 1635.0,485.1 1636.5,482.6 1638.0,480.2 1639.5,477.7 1641.0,475.2 1642.5,472.8 1644.0,470.3 1645.5,467.9 1647.0,465.5 1648.5,463.1 1650.0,460.7 1651.5,458.3 1653.0,456.0 1654.5,453.7 1656.0,451.4 1657.5,449.2 1659.0,447.0 1660.5,444.8 1662.0,442.7 1663.5,440.6 1665.0,438.6 1666.5,436.6 1668.0,434.7 1669.5,432.8 1671.0,431.0 1672.5,429.2 1674.0,427.5 1675.5,425.9 1677.0,424.3 1678.5,422.8 1680.0,421.3 1681.5,420.0 1683.0,418.7 1684.5,417.4 1686.0,416.3 1687.5,415.2 1689.0,414.2 1690.5,413.3 1692.0,412.4 1693.5,411.7 1695.0,411.0 1696.5,410.4 1698.0,409.9 1699.5,409.4 1701.0,409.1 1702.5,408.8 1704.0,408.6" fill="none" stroke="#00c8c8" stroke-width="1.3"/><polyline points="1254.0,519.6 1255.5,521.6 1257.0,523.4 1258.5,525.3 1260.0,527.0 1261.5,528.8 1263.0,530.4 1264.5,532.0 1266.0,533.6 1267.5,535.0 1269.0,536.5 1270.5,537.8 1272.0,539.1 1273.5,540.3 1275.0,541.5 1276.5,542.5 1278.0,543.5 1279.5,544.4 1281.0,545.3 1282.5,546.1 1284.0,546.8 1285.5,547.4 1287.0,547.9 1288.5,548.4 1290.0,548.8 1291.5,549.1 1293.0,549.3 1294.5,549.4 1296.0,549.5 1297.5,549.5 1299.0,549.4 1300.5,549.2 1302.0,548.9 1303.5,548.6 1305.0,548.2 1306.5,547.7 1308.0,547.1 1309.5,546.4 1311.0,545.7 1312.5,544.9 1314.0,544.0 1315.5,543.0 1317.0,542.0 1318.5,540.9 1320.0,539.7 1321.5,538.4 1323.0,537.1 1324.5,535.7 1326.0,534.3 1327.5,532.7 1329.0,531.2 1330.5,529.5 1332.0,527.8 1333.5,526.1 1335.0,524.3 1336.5,522.4 1338.0,520.5 1339.5,518.6 1341.0,516.6 1342.5,514.6 1344.0,512.5 1345.5,510.4 1347.0,508.2 1348.5,506.0 1350.0,503.8 1351.5,501.6 1353.0,499.3 1354.5,497.0 1356.0,494.7 1357.5,492.4 1359.0,490.1 1360.5,487.7 1362.0,485.4 1363.5,483.0 1365.0,480.7 1366.5,478.3 1368.0,475.9 1369.5,473.6 1371.0,471.2 1372.5,468.9 1374.0,466.6 1375.5,464.3 1377.0,462.0 1378.5,459.7 1380.0,457.5 1381.5,455.2 1383.0,453.1 1384.5,450.9 1386.0,448.8 1387.5,446.7 1389.0,444.7 1390.5,442.7 1392.0,440.7 1393.5,438.8 1395.0,436.9 1396.5,435.1 1398.0,433.4 1399.5,431.7 1401.0,430.0 1402.5,428.5 1404.0,426.9 1405.5,425.5 1407.0,424.1 1408.5,422.8 1410.0,421.5 1411.5,420.3 1413.0,419.2 1414.5,418.1 1416.0,417.2 1417.5,416.3 1419.0,415.4 1420.5,414.7 1422.0,414.0 1423.5,413.4 1425.0,412.9 1426.5,412.5 1428.0,412.1 1429.5,411.8 1431.0,411.6 1432.5,411.5 1434.0,411.5 1435.5,411.5 1437.0,411.7 1438.5,411.9 1440.0,412.2 1441.5,412.6 1443.0,413.0 1444.5,413.5 1446.0,414.1 1447.5,414.8 1449.0,415.6 1450.5,416.4 1452.0,417.3 1453.5,418.3 1455.0,419.4 1456.5,420.5 1458.0,421.7 1459.5,423.0 1461.0,424.4 1462.5,425.8 1464.0,427.2 1465.5,428.8 1467.0,430.4 1468.5,432.0 1470.0,433.7 1471.5,435.5 1473.0,437.3 1474.5,439.2 1476.0,441.1 1477.5,443.1 1479.0,445.1 1480.5,447.1 1482.0,449.2 1483.5,451.3 1485.0,453.5 1486.5,455.7 1488.0,457.9 1489.5,460.2 1491.0,462.4 1492.5,464.7 1494.0,467.0 1495.5,469.4 1497.0,471.7 1498.5,474.0 1500.0,476.4 1501.5,478.8 1503.0,481.1 1504.5,483.5 1506.0,485.9 1507.5,488.2 1509.0,490.6 1510.5,492.9 1512.0,495.2 1513.5,497.5 1515.0,499.8 1516.5,502.0 1518.0,504.3 1519.5,506.5 1521.0,508.7 1522.5,510.8 1524.0,512.9 1525.5,515.0 1527.0,517.0 1528.5,519.0 1530.0,520.9 1531.5,522.8 1533.0,524.7 1534.5,526.5 1536.0,528.2 1537.5,529.9 1539.0,531.5 1540.5,533.1 1542.0,534.6 1543.5,536.0 1545.0,537.4 1546.5,538.7 1548.0,539.9 1549.5,541.1 1551.0,542.2 1552.5,543.2 1554.0,544.1 1555.5,545.0 1557.0,545.8 1558.5,546.5 1560.0,547.2 1561.5,547.8 1563.0,548.2 1564.5,548.7 1566.0,549.0 1567.5,549.2 1569.0,549.4 1570.5,549.5 1572.0,549.5 1573.5,549.4 1575.0,549.3 1576.5,549.0 1578.0,548.7 1579.5,548.3 1581.0,547.8 1582.5,547.3 1584.0,546.6 1585.5,545.9 1587.0,545.1 1588.5,544.3 1590.0,543.3 1591.5,542.3 1593.0,541.2 1594.5,540.1 1596.0,538.8 1597.5,537.5 1599.0,536.2 1600.5,534.8 1602.0,533.3 1603.5,531.7 1605.0,530.1 1606.5,528.4 1608.0,526.7 1609.5,524.9 1611.0,523.1 1612.5,521.2 1614.0,519.3 1615.5,517.3 1617.0,515.3 1618.5,513.2 1620.0,511.1 1621.5,508.9 1623.0,506.8 1624.5,504.6 1626.0,502.3 1627.5,500.1 1629.0,497.8 1630.5,495.5 1632.0,493.2 1633.5,490.9 1635.0,488.5 1636.5,486.2 1638.0,483.8 1639.5,481.4 1641.0,479.1 1642.5,476.7 1644.0,474.4 1645.5,472.0 1647.0,469.7 1648.5,467.3 1650.0,465.0 1651.5,462.7 1653.0,460.5 1654.5,458.2 1656.0,456.0 1657.5,453.8 1659.0,451.6 1660.5,449.5 1662.0,447.4 1663.5,445.3 1665.0,443.3 1666.5,441.4 1668.0,439.4 1669.5,437.6 1671.0,435.7 1672.5,434.0 1674.0,432.2 1675.5,430.6 1677.0,429.0 1678.5,427.4 1680.0,426.0 1681.5,424.5 1683.0,423.2 1684.5,421.9 1686.0,420.7 1687.5,419.5 1689.0,418.5 1690.5,417.5 1692.0,416.6 1693.5,415.7 1695.0,414.9 1696.5,414.2 1698.0,413.6 1699.5,413.1 1701.0,412.6 1702.5,412.2 1704.0,411.9" fill="none" stroke="#ff0000" stroke-width="1.3"/><line x1="1253.5" y1="340" x2="1253.5" y2="615" stroke="#00ff00" stroke-width="1.3"/><path d="M1245,339 L1262,339 L1253.5,349Z" fill="#ff00ff"/><path d="M1245,339 L1262,339 L1260,341 L1247,341Z" fill="#00c8ff"/><text x="1253.5" y="345" font-size="6" fill="#fff" text-anchor="middle" font-family="Liberation Sans">1</text><circle cx="1253.5" cy="522.5" r="3.5" fill="none" stroke="#ff00ff" stroke-width="1.2"/></svg>
<div class="a" style="left:1243px;top:625px;width:565px;height:16px;background:#f0f0f0"></div>
<div class="t" style="left:1247px;top:626px;font-size:16px;color:#555;">&lsaquo;</div>
<div class="a" style="left:1781px;top:627px;width:17px;height:11px;background:#cdcdcd"></div>
<div class="t" style="left:1801px;top:626px;font-size:13px;color:#333;">×</div>
<div class="a" style="left:1243px;top:642px;width:58px;height:59px;border:1px solid #d0d0d0;border-right-color:#fff;border-bottom-color:#fff"></div>
<div class="a" style="left:1302px;top:642px;width:356px;height:59px;background:#fff;border-top:2px solid #a0a0a0;border-left:2px solid #a0a0a0"></div>
<div class="t" style="left:1248px;top:651px;font-size:12px;color:#000;">T1</div>
<div class="t" style="left:1248px;top:666px;font-size:12px;color:#000;">T2</div>
<div class="t" style="left:1247px;top:685px;font-size:12px;color:#000;">T2-T1</div>
<div class="a" style="left:1268px;top:651px;width:15px;height:14px;background:#e1e1e1;border:1px solid #c4c4c4"></div>
<div class="a" style="left:1285px;top:651px;width:13px;height:14px;background:#e1e1e1;border:1px solid #c4c4c4"></div>
<div class="a" style="left:1271px;top:653px"><svg width="10" height="10" style="margin-top:2px"><path d="M0.5,5 L5,0.5 L5,3.6 L9.5,3.6 L9.5,6.4 L5,6.4 L5,9.5Z" fill="#000"/></svg></div><div class="a" style="left:1287px;top:653px"><svg width="10" height="10" style="margin-top:2px"><path d="M9.5,5 L5,0.5 L5,3.6 L0.5,3.6 L0.5,6.4 L5,6.4 L5,9.5Z" fill="#000"/></svg></div>
<div class="a" style="left:1268px;top:668px;width:15px;height:14px;background:#e1e1e1;border:1px solid #c4c4c4"></div>
<div class="a" style="left:1285px;top:668px;width:13px;height:14px;background:#e1e1e1;border:1px solid #c4c4c4"></div>
<div class="a" style="left:1271px;top:670px"><svg width="10" height="10" style="margin-top:2px"><path d="M0.5,5 L5,0.5 L5,3.6 L9.5,3.6 L9.5,6.4 L5,6.4 L5,9.5Z" fill="#000"/></svg></div><div class="a" style="left:1287px;top:670px"><svg width="10" height="10" style="margin-top:2px"><path d="M9.5,5 L5,0.5 L5,3.6 L0.5,3.6 L0.5,6.4 L5,6.4 L5,9.5Z" fill="#000"/></svg></div>
<div class="t" style="left:1273px;width:120px;text-align:center;top:646px;font-size:11.5px;letter-spacing:0">Время</div>
<div class="t" style="left:1273px;width:120px;text-align:center;top:659px;font-size:11.5px;letter-spacing:0">416.755 ms</div>
<div class="t" style="left:1273px;width:120px;text-align:center;top:672px;font-size:11.5px;letter-spacing:0">416.755 ms</div>
<div class="t" style="left:1273px;width:120px;text-align:center;top:685px;font-size:11.5px;letter-spacing:0">0.000 s</div>
<div class="t" style="left:1354.5px;width:120px;text-align:center;top:646px;font-size:11.5px;letter-spacing:0">Канал_A</div>
<div class="t" style="left:1354.5px;width:120px;text-align:center;top:659px;font-size:11.5px;letter-spacing:0">-4.801 V</div>
<div class="t" style="left:1354.5px;width:120px;text-align:center;top:672px;font-size:11.5px;letter-spacing:0">-4.801 V</div>
<div class="t" style="left:1354.5px;width:120px;text-align:center;top:685px;font-size:11.5px;letter-spacing:0">0.000 V</div>
<div class="t" style="left:1434px;width:120px;text-align:center;top:646px;font-size:11.5px;letter-spacing:0">Канал_B</div>
<div class="t" style="left:1434px;width:120px;text-align:center;top:659px;font-size:11.5px;letter-spacing:0">-16.843 V</div>
<div class="t" style="left:1434px;width:120px;text-align:center;top:672px;font-size:11.5px;letter-spacing:0">-16.843 V</div>
<div class="t" style="left:1434px;width:120px;text-align:center;top:685px;font-size:11.5px;letter-spacing:0">0.000 V</div>
<div class="btn" style="left:1666px;top:650px;width:61px;height:21px;line-height:19px;color:#000;font-size:12px;">Экран</div>
<div class="btn" style="left:1666px;top:677px;width:61px;height:21px;line-height:19px;color:#000;font-size:12px;">Сохранить</div>
<div class="t" style="left:1735px;top:692px;font-size:12px;color:#000;">Внешняя</div>
<div class="rad" style="left:1784.5px;top:691.5px;width:13.0px;height:13.0px"></div>
<div class="grp" style="left:1244px;top:716px;width:132px;height:70px"></div>
<div class="gl" style="left:1248px;top:710.9px;font-size:12px">Развертка</div>
<div class="t" style="left:1245px;top:727px;font-size:12px;color:#000;">Шкала:</div>
<div class="fld" style="left:1288px;top:723px;width:83px;height:18px;line-height:16px;text-align:left;padding-left:6px;font-size:12px;">10 us/Div</div>
<div class="t" style="left:1245px;top:747px;font-size:12px;color:#000;">задержка X</div>
<div class="fld" style="left:1309px;top:744px;width:62px;height:19px;line-height:17px;text-align:left;padding-left:6px;font-size:12px;">0</div>
<div class="btn sel" style="left:1250px;top:768px;width:25px;height:16px;line-height:14px;color:#000;font-size:12px;">Y/T</div>
<div class="btn" style="left:1277px;top:768px;width:27px;height:16px;line-height:14px;color:#000;font-size:12px;">Add</div>
<div class="btn" style="left:1307px;top:768px;width:28px;height:16px;line-height:14px;color:#000;font-size:12px;">B/A</div>
<div class="btn" style="left:1337px;top:768px;width:28px;height:16px;line-height:14px;color:#000;font-size:12px;">A/B</div>
<div class="grp" style="left:1377px;top:716px;width:129px;height:70px"></div>
<div class="gl" style="left:1382px;top:710.9px;font-size:12px">Канал A</div>
<div class="t" style="left:1380px;top:727px;font-size:12px;color:#000;">Шкала</div>
<div class="fld" style="left:1419px;top:723px;width:84px;height:18px;line-height:16px;text-align:left;padding-left:4px;font-size:12px;">5&nbsp; V/Div</div>
<div class="t" style="left:1380px;top:747px;font-size:12px;color:#000;">смещение Y</div>
<div class="fld" style="left:1443px;top:744px;width:60px;height:19px;line-height:17px;text-align:left;padding-left:5px;font-size:12px;">-0</div>
<div class="btn sel" style="left:1381px;top:768px;width:25px;height:16px;line-height:14px;color:#000;font-size:12px;">AC</div>
<div class="btn" style="left:1408px;top:768px;width:25px;height:16px;line-height:14px;color:#000;font-size:12px;">0</div>
<div class="btn" style="left:1435px;top:768px;width:25px;height:16px;line-height:14px;color:#000;font-size:12px;">DC</div>
<div class="rad dis" style="left:1484.5px;top:768.5px;width:13.0px;height:13.0px"></div>
<div class="grp" style="left:1507px;top:716px;width:128px;height:70px"></div>
<div class="gl" style="left:1513px;top:710.9px;font-size:12px">Канал B</div>
<div class="t" style="left:1508px;top:727px;font-size:12px;color:#000;">Шкала</div>
<div class="fld" style="left:1549px;top:723px;width:67px;height:18px;line-height:16px;text-align:left;padding-left:5px;font-size:12px;border-color:#0078d7">20&nbsp; V/Div</div>
<div class="a" style="left:1617px;top:723px;width:15px;height:9px;border:1px solid #c8c8c8;background:#f0f0f0"></div><div class="a" style="left:1617px;top:732px;width:15px;height:9px;border:1px solid #c8c8c8;background:#f0f0f0"></div>
<svg class="a" style="left:1620px;top:725px" width="10" height="16"><path d="M2,5 L8,5 L5,1Z M2,10 L8,10 L5,14Z" fill="#000"/></svg>
<div class="t" style="left:1508px;top:747px;font-size:12px;color:#000;">смещение Y</div>
<div class="fld" style="left:1573px;top:744px;width:60px;height:19px;line-height:17px;text-align:left;padding-left:5px;font-size:12px;">0</div>
<div class="btn sel" style="left:1511px;top:768px;width:24px;height:16px;line-height:14px;color:#000;font-size:12px;">AC</div>
<div class="btn" style="left:1537px;top:768px;width:22px;height:16px;line-height:14px;color:#000;font-size:12px;">0</div>
<div class="btn" style="left:1561px;top:768px;width:25px;height:16px;line-height:14px;color:#000;font-size:12px;">DC</div>
<div class="btn" style="left:1588px;top:768px;width:19px;height:16px;line-height:14px;color:#000;font-size:12px;">-</div>
<div class="rad dis" style="left:1620.0px;top:768.5px;width:13.0px;height:13.0px"></div>
<div class="grp" style="left:1637px;top:716px;width:193px;height:70px"></div>
<div class="gl" style="left:1643px;top:710.9px;font-size:12px">Синхронизация</div>
<div class="t" style="left:1640px;top:727px;font-size:12px;color:#000;">Запуск</div>
<div class="btn sel" style="left:1699px;top:726px;width:16px;height:17px;line-height:15px;color:#000;font-size:12px;line-height:0"><svg width="12" height="12" style="margin-top:2px"><path d="M1,10 L5,10 L5,2 L11,2 M3,7 L5,4 L7,7" fill="none" stroke="#000"/></svg></div>
<div class="btn" style="left:1718px;top:726px;width:15px;height:17px;line-height:15px;color:#000;font-size:12px;line-height:0"><svg width="12" height="12" style="margin-top:2px"><path d="M1,2 L5,2 L5,10 L11,10 M3,6 L5,9 L7,6" fill="none" stroke="#000"/></svg></div>
<div class="btn sel" style="left:1738px;top:726px;width:17px;height:17px;line-height:15px;color:#000;font-size:12px;">A</div>
<div class="btn" style="left:1757px;top:726px;width:18px;height:17px;line-height:15px;color:#a0a0a0;font-size:12px;background:#cccccc;border-color:#bfbfbf;">B</div>
<div class="btn" style="left:1777px;top:726px;width:53px;height:17px;line-height:15px;color:#a0a0a0;font-size:12px;background:#cccccc;border-color:#bfbfbf;text-align:left;padding-left:3px">Внеш</div>
<div class="t" style="left:1640px;top:747px;font-size:12px;color:#000;">Уровень</div>
<div class="fld" style="left:1698px;top:746px;width:85px;height:19px;line-height:17px;text-align:left;padding-left:7px;font-size:12px;">0</div>
<div class="fld" style="left:1783px;top:746px;width:47px;height:19px;line-height:17px;text-align:left;padding-left:9px;font-size:12px;">V</div>
<div class="btn" style="left:1642px;top:767px;width:41px;height:17px;line-height:15px;color:#000;font-size:12px;">Одн.</div>
<div class="btn" style="left:1685px;top:767px;width:46px;height:17px;line-height:15px;color:#000;font-size:12px;">Норм</div>
<div class="btn" style="left:1733px;top:767px;width:37px;height:17px;line-height:15px;color:#000;font-size:12px;">Авто</div>
<div class="btn sel" style="left:1772px;top:767px;width:58px;height:17px;line-height:15px;color:#000;font-size:12px;text-align:left;padding-left:5px">Нет</div>
<div class="win" style="left:845px;top:556px;width:368px;height:265px">
<div class="tb" style="height:31px"></div>
<div class="ttl" style="left:8px;top:8.0px;color:#999;font-size:13px">Измеритель нелинейных искажений-XDA1</div>
<svg class="a" style="right:9px;top:9.5px" width="12" height="12"><path d="M0.5,0.5 L11.5,11.5 M11.5,0.5 L0.5,11.5" stroke="#777" stroke-width="1.1"/></svg>
</div>
<div class="t" style="left:846px;width:366px;text-align:center;top:589px;font-size:12px">Общие нелинейные искажения(THD)</div>
<div class="a" style="left:848px;top:604px;width:361px;height:78px;background:#fff"></div>
<div class="a" style="left:848px;top:604px;width:360px;height:77px;background:#696969"></div>
<div class="a" style="left:849px;top:605px;width:359px;height:76px;background:#a0a0a0"></div>
<div class="a" style="left:850px;top:606px;width:358px;height:75px;background:#fff"></div>
<div class="a" style="left:850px;top:606px;width:357px;height:74px;background:#000"></div>
<div class="t" style="left:950px;width:175px;text-align:center;top:610px;font-size:15px;color:#fff">0.012 %</div>
<div class="a" style="left:846px;top:683px;width:366px;height:2px;background:#fff;border-top:1px solid #a0a0a0"></div>
<div class="btn sel" style="left:853px;top:703px;width:41px;height:24px;line-height:22px;color:#000;font-size:12px;">Старт</div>
<div class="btn" style="left:853px;top:735px;width:41px;height:24px;line-height:22px;color:#000;font-size:12px;">Стоп</div>
<div class="grp" style="left:903px;top:688px;width:306px;height:85px"></div>
<div class="t" style="left:910px;top:703px;font-size:12px;color:#000;">Основная частота.</div>
<div class="fld" style="left:1017px;top:700px;width:144px;height:20px;line-height:18px;text-align:center;padding-left:0px;font-size:12px;background:#f0f0f0;border-color:#cfcfcf;color:#888;">20</div>
<div class="fld" style="left:1162px;top:700px;width:36px;height:20px;line-height:18px;text-align:left;padding-left:3px;font-size:12px;background:#f0f0f0;border-color:#cfcfcf;color:#888;">kHz</div>
<div class="t" style="left:942px;top:735px;font-size:12px;color:#000;">Разрешение.</div>
<div class="a" style="left:1017px;top:730px;width:181px;height:21px;background:#cccccc;border:1px solid #c4c4c4"></div>
<div class="t" style="left:1020px;top:735px;font-size:12px;color:#888;">5 kHz</div>
<svg class="a" style="left:1182px;top:737px" width="11" height="7"><path d="M1,1 L5.5,5.5 L10,1" fill="none" stroke="#999"/></svg>
<div class="a" style="left:1017px;top:752px;width:181px;height:19px;background:#f0f0f0;border-left:1px solid #a0a0a0;border-top:1px solid #a0a0a0"></div>
<div class="t" style="left:1017px;width:181px;text-align:center;top:755px;font-size:12px">5 kHz</div>
<div class="grp" style="left:851px;top:785px;width:188px;height:32px"></div>
<div class="gl" style="left:857px;top:779.9px;font-size:12px">Управление</div>
<div class="grp" style="left:1039px;top:785px;width:66px;height:32px"></div>
<div class="gl" style="left:1044px;top:779.9px;font-size:12px">Экран</div>
<div class="btn sel" style="left:859px;top:794px;width:55px;height:17px;line-height:15px;color:#000;font-size:12px;">THD</div>
<div class="btn" style="left:919px;top:794px;width:55px;height:17px;line-height:15px;color:#000;font-size:12px;">SINAD</div>
<div class="btn" style="left:979px;top:794px;width:55px;height:17px;line-height:15px;color:#a0a0a0;font-size:12px;background:#cccccc;border-color:#bfbfbf;">Уст...</div>
<div class="btn sel" style="left:1042px;top:794px;width:25px;height:17px;line-height:15px;color:#000;font-size:12px;">%</div>
<div class="btn" style="left:1072px;top:794px;width:25px;height:17px;line-height:15px;color:#000;font-size:12px;">dB</div>
<div class="t" style="left:1170px;top:800px;font-size:12px;color:#000;">Вх</div>
<div class="rad dis" style="left:1184.5px;top:799.5px;width:13.0px;height:13.0px"></div>
<svg class="a" style="left:1200px;top:808px" width="11" height="11"><g fill="#aaa"><rect x="8" y="0" width="2" height="2"/><rect x="4" y="4" width="2" height="2"/><rect x="8" y="4" width="2" height="2"/><rect x="0" y="8" width="2" height="2"/><rect x="4" y="8" width="2" height="2"/><rect x="8" y="8" width="2" height="2"/></g></svg>
<div class="win" style="left:12px;top:634px;width:263px;height:238px">
<div class="tb" style="height:31px"></div>
<div class="ttl" style="left:8px;top:8.0px;color:#999;font-size:13px">Функциональный генератор-XFG1</div>
<svg class="a" style="right:9px;top:9.5px" width="12" height="12"><path d="M0.5,0.5 L11.5,11.5 M11.5,0.5 L0.5,11.5" stroke="#777" stroke-width="1.1"/></svg>
</div>
<div class="grp" style="left:17px;top:673px;width:252px;height:35px"></div>
<div class="gl" style="left:21px;top:667.9px;font-size:12px">Форма сигнала</div>
<div class="btn sel" style="left:27px;top:683px;width:76px;height:16px;line-height:14px;color:#000;font-size:12px;line-height:0"><svg width="50" height="10" style="margin-top:3px"><path d="M2,6 C8,-1 16,-1 22,5 C28,11 36,10 42,4 C44,2 46,2 48,3" fill="none" stroke="#000"/></svg></div>
<div class="btn" style="left:107px;top:683px;width:76px;height:16px;line-height:14px;color:#000;font-size:12px;line-height:0"><svg width="50" height="10" style="margin-top:3px"><path d="M2,8 L12,3 L22,8 L32,3 L42,8 L48,6" fill="none" stroke="#000"/></svg></div>
<div class="btn" style="left:187px;top:683px;width:75px;height:16px;line-height:14px;color:#000;font-size:12px;line-height:0"><svg width="50" height="10" style="margin-top:3px"><path d="M4,8 L14,8 L14,2 L22,2 L22,8 L28,8 L28,2 L36,2 L36,8 L46,8" fill="none" stroke="#000"/></svg></div>
<div class="grp" style="left:17px;top:709px;width:252px;height:119px"></div>
<div class="gl" style="left:21px;top:703.9px;font-size:12px">Параметры сигнала</div>
<div class="t" style="left:28px;top:722px;font-size:12px;color:#000;">Частота</div>
<div class="fld" style="left:109px;top:718px;width:120px;height:20px;line-height:18px;text-align:left;padding-left:5px;font-size:12px;">20</div>
<div class="fld" style="left:229px;top:718px;width:36px;height:20px;line-height:18px;text-align:left;padding-left:3px;font-size:12px;">kHz</div>
<div class="t" style="left:28px;top:742px;font-size:12px;color:#000;">Длительность</div>
<div class="fld" style="left:109px;top:738px;width:120px;height:19px;line-height:17px;text-align:left;padding-left:5px;font-size:12px;background:#f0f0f0;border-color:#cfcfcf;color:#888;">50</div>
<div class="fld" style="left:229px;top:738px;width:36px;height:19px;line-height:17px;text-align:left;padding-left:8px;font-size:12px;background:#f0f0f0;border-color:#cfcfcf;color:#888;">%</div>
<div class="t" style="left:28px;top:761px;font-size:12px;color:#000;">Амплитуда</div>
<div class="fld" style="left:109px;top:757px;width:120px;height:20px;line-height:18px;text-align:left;padding-left:5px;font-size:12px;">600</div>
<div class="fld" style="left:229px;top:757px;width:36px;height:20px;line-height:18px;text-align:left;padding-left:3px;font-size:12px;">mVp</div>
<div class="t" style="left:28px;top:781px;font-size:12px;color:#000;">Смещение</div>
<div class="fld" style="left:109px;top:777px;width:120px;height:19px;line-height:17px;text-align:left;padding-left:5px;font-size:12px;">0</div>
<div class="fld" style="left:229px;top:777px;width:36px;height:19px;line-height:17px;text-align:left;padding-left:8px;font-size:12px;">V</div>
<div class="btn" style="left:71px;top:802px;width:140px;height:21px;line-height:19px;color:#a0a0a0;font-size:12px;background:#cccccc;border-color:#bfbfbf;">Фронт/Спад</div>
<div class="t" style="left:35px;top:836px;font-size:13px;color:#000;">+</div>
<div class="t" style="left:94px;top:835px;font-size:12px;color:#000;">Общий</div>
<div class="t" style="left:240px;top:840px;font-size:12px;color:#000;">–</div>
<div class="rad dis" style="left:32.0px;top:849.5px;width:13.0px;height:13.0px"></div>
<div class="rad dis" style="left:103.0px;top:849.5px;width:13.0px;height:13.0px"></div>
<div class="rad" style="left:237.5px;top:851.5px;width:13.0px;height:13.0px"></div>
<svg class="a" style="left:262px;top:859px" width="11" height="11"><g fill="#aaa"><rect x="8" y="0" width="2" height="2"/><rect x="4" y="4" width="2" height="2"/><rect x="8" y="4" width="2" height="2"/><rect x="0" y="8" width="2" height="2"/><rect x="4" y="8" width="2" height="2"/><rect x="8" y="8" width="2" height="2"/></g></svg>
<div class="a" style="left:0;top:877px;width:1808px;height:16px;background:#f0f0f0"></div>
<div class="t" style="left:2px;top:881px;font-size:12px;color:#000;letter-spacing:-0.15px">Для вызова справки нажать F1</div>
<div class="t" style="left:1301px;top:881px;font-size:12px;color:#000;">-</div>
<div class="a" style="left:1379px;top:877px;width:1px;height:16px;background:#d7d7d7"></div>
<div class="a" style="left:1617px;top:877px;width:1px;height:16px;background:#d7d7d7"></div>
<div class="t" style="left:1384px;top:881px;font-size:12px;color:#000;letter-spacing:-0.15px">Схема1: Моделирование...</div>
<div class="t" style="left:1622px;top:881px;font-size:12px;color:#000;letter-spacing:-0.15px">Время раб: 0.417 s</div>
<svg class="a" style="left:0;top:840px" width="90" height="40"><path d="M3,31 L6,34 L77,34 L80,31" fill="none" stroke="#000" stroke-width="1.5"/><rect x="7.5" y="15.5" width="6" height="15" fill="#fff" stroke="#000"/><path d="M9,18 v10" stroke="#f00"/><line x1="0" y1="11.5" x2="3" y2="11.5" stroke="#555"/></svg>
</body></html>
